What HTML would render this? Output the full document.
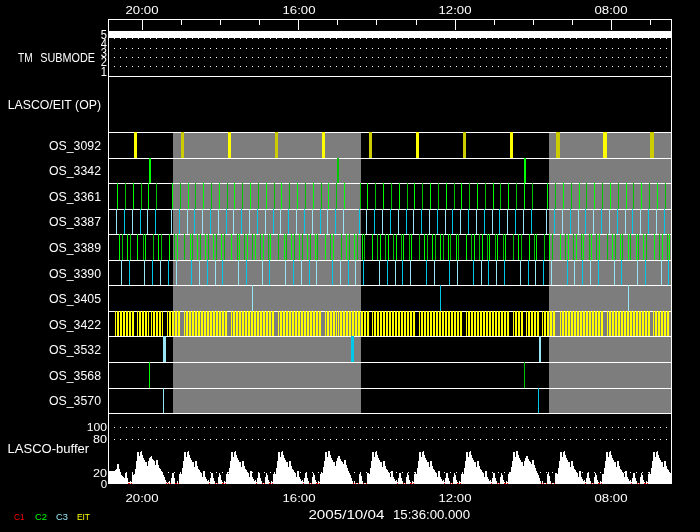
<!DOCTYPE html>
<html><head><meta charset="utf-8"><title>LASCO/EIT schedule</title>
<style>
html,body{margin:0;padding:0;background:#000;}
body{width:700px;height:532px;overflow:hidden;font-family:"Liberation Sans",sans-serif;}
svg{display:block;will-change:transform;}
text{font-family:"Liberation Sans",sans-serif;}
</style></head><body>
<svg width="700" height="532" viewBox="0 0 700 532" shape-rendering="crispEdges" font-family="'Liberation Sans', sans-serif">
<rect x="173" y="132" width="188" height="281" fill="#7d7d7d"/>
<rect x="549" y="132" width="122" height="281" fill="#7d7d7d"/>
<rect x="108" y="132" width="564" height="1" fill="#fff"/>
<rect x="108" y="158" width="564" height="1" fill="#fff"/>
<rect x="108" y="183" width="564" height="1" fill="#fff"/>
<rect x="108" y="209" width="564" height="1" fill="#fff"/>
<rect x="108" y="234" width="564" height="1" fill="#fff"/>
<rect x="108" y="260" width="564" height="1" fill="#fff"/>
<rect x="108" y="285" width="564" height="1" fill="#fff"/>
<rect x="108" y="311" width="564" height="1" fill="#fff"/>
<rect x="108" y="336" width="564" height="1" fill="#fff"/>
<rect x="108" y="362" width="564" height="1" fill="#fff"/>
<rect x="108" y="388" width="564" height="1" fill="#fff"/>
<rect x="108" y="413" width="564" height="1" fill="#fff"/>
<rect x="108" y="76" width="564" height="1" fill="#fff"/>
<rect x="134" y="132" width="3" height="26" fill="#ffff00"/>
<rect x="181" y="132" width="3" height="26" fill="#cccc00"/>
<rect x="228" y="132" width="3" height="26" fill="#ffff00"/>
<rect x="275" y="132" width="3" height="26" fill="#cccc00"/>
<rect x="322" y="132" width="3" height="26" fill="#ffff00"/>
<rect x="369" y="132" width="3" height="26" fill="#cccc00"/>
<rect x="416" y="132" width="3" height="26" fill="#ffff00"/>
<rect x="463" y="132" width="3" height="26" fill="#cccc00"/>
<rect x="510" y="132" width="3" height="26" fill="#ffff00"/>
<rect x="556" y="132" width="4" height="26" fill="#cccc00"/>
<rect x="603" y="132" width="4" height="26" fill="#ffff00"/>
<rect x="650" y="132" width="4" height="26" fill="#cccc00"/>
<rect x="149" y="158" width="2" height="25" fill="#00ff00"/>
<rect x="337" y="158" width="2" height="25" fill="#00c400"/>
<rect x="524" y="158" width="2" height="25" fill="#00ff00"/>
<rect x="117" y="183" width="1" height="26" fill="#00ff00"/>
<rect x="125" y="183" width="1" height="26" fill="#00c400"/>
<rect x="133" y="183" width="1" height="26" fill="#00ff00"/>
<rect x="141" y="183" width="1" height="26" fill="#00c400"/>
<rect x="148" y="183" width="1" height="26" fill="#00ff00"/>
<rect x="156" y="183" width="1" height="26" fill="#00c400"/>
<rect x="172" y="183" width="1" height="26" fill="#00ff00"/>
<rect x="180" y="183" width="1" height="26" fill="#00c400"/>
<rect x="188" y="183" width="1" height="26" fill="#00ff00"/>
<rect x="195" y="183" width="1" height="26" fill="#00c400"/>
<rect x="203" y="183" width="1" height="26" fill="#00ff00"/>
<rect x="211" y="183" width="1" height="26" fill="#00c400"/>
<rect x="219" y="183" width="1" height="26" fill="#00ff00"/>
<rect x="227" y="183" width="1" height="26" fill="#00c400"/>
<rect x="234" y="183" width="1" height="26" fill="#00ff00"/>
<rect x="242" y="183" width="1" height="26" fill="#00c400"/>
<rect x="250" y="183" width="1" height="26" fill="#00ff00"/>
<rect x="258" y="183" width="1" height="26" fill="#00c400"/>
<rect x="266" y="183" width="1" height="26" fill="#00ff00"/>
<rect x="274" y="183" width="1" height="26" fill="#00c400"/>
<rect x="281" y="183" width="1" height="26" fill="#00ff00"/>
<rect x="289" y="183" width="1" height="26" fill="#00c400"/>
<rect x="297" y="183" width="1" height="26" fill="#00ff00"/>
<rect x="305" y="183" width="1" height="26" fill="#00c400"/>
<rect x="313" y="183" width="1" height="26" fill="#00ff00"/>
<rect x="321" y="183" width="1" height="26" fill="#00c400"/>
<rect x="328" y="183" width="1" height="26" fill="#00ff00"/>
<rect x="336" y="183" width="1" height="26" fill="#00c400"/>
<rect x="344" y="183" width="1" height="26" fill="#00ff00"/>
<rect x="360" y="183" width="1" height="26" fill="#00c400"/>
<rect x="367" y="183" width="1" height="26" fill="#00ff00"/>
<rect x="375" y="183" width="1" height="26" fill="#00c400"/>
<rect x="383" y="183" width="1" height="26" fill="#00ff00"/>
<rect x="391" y="183" width="1" height="26" fill="#00c400"/>
<rect x="399" y="183" width="1" height="26" fill="#00ff00"/>
<rect x="407" y="183" width="1" height="26" fill="#00c400"/>
<rect x="414" y="183" width="1" height="26" fill="#00ff00"/>
<rect x="422" y="183" width="1" height="26" fill="#00c400"/>
<rect x="430" y="183" width="1" height="26" fill="#00ff00"/>
<rect x="438" y="183" width="1" height="26" fill="#00c400"/>
<rect x="446" y="183" width="1" height="26" fill="#00ff00"/>
<rect x="454" y="183" width="1" height="26" fill="#00c400"/>
<rect x="461" y="183" width="1" height="26" fill="#00ff00"/>
<rect x="469" y="183" width="1" height="26" fill="#00c400"/>
<rect x="477" y="183" width="1" height="26" fill="#00ff00"/>
<rect x="485" y="183" width="1" height="26" fill="#00c400"/>
<rect x="493" y="183" width="1" height="26" fill="#00ff00"/>
<rect x="500" y="183" width="1" height="26" fill="#00c400"/>
<rect x="508" y="183" width="1" height="26" fill="#00ff00"/>
<rect x="516" y="183" width="1" height="26" fill="#00c400"/>
<rect x="524" y="183" width="1" height="26" fill="#00ff00"/>
<rect x="532" y="183" width="1" height="26" fill="#00c400"/>
<rect x="547" y="183" width="1" height="26" fill="#00ff00"/>
<rect x="555" y="183" width="1" height="26" fill="#00c400"/>
<rect x="563" y="183" width="1" height="26" fill="#00ff00"/>
<rect x="571" y="183" width="1" height="26" fill="#00c400"/>
<rect x="579" y="183" width="1" height="26" fill="#00ff00"/>
<rect x="586" y="183" width="1" height="26" fill="#00c400"/>
<rect x="594" y="183" width="1" height="26" fill="#00ff00"/>
<rect x="602" y="183" width="1" height="26" fill="#00c400"/>
<rect x="610" y="183" width="1" height="26" fill="#00ff00"/>
<rect x="618" y="183" width="1" height="26" fill="#00c400"/>
<rect x="626" y="183" width="1" height="26" fill="#00ff00"/>
<rect x="633" y="183" width="1" height="26" fill="#00c400"/>
<rect x="641" y="183" width="1" height="26" fill="#00ff00"/>
<rect x="649" y="183" width="1" height="26" fill="#00c400"/>
<rect x="657" y="183" width="1" height="26" fill="#00ff00"/>
<rect x="665" y="183" width="1" height="26" fill="#00c400"/>
<rect x="116" y="209" width="1" height="25" fill="#96e6f5"/>
<rect x="124" y="209" width="1" height="25" fill="#00c8eb"/>
<rect x="132" y="209" width="1" height="25" fill="#96e6f5"/>
<rect x="140" y="209" width="1" height="25" fill="#00c8eb"/>
<rect x="147" y="209" width="1" height="25" fill="#96e6f5"/>
<rect x="155" y="209" width="1" height="25" fill="#00c8eb"/>
<rect x="171" y="209" width="1" height="25" fill="#96e6f5"/>
<rect x="179" y="209" width="1" height="25" fill="#00c8eb"/>
<rect x="187" y="209" width="1" height="25" fill="#96e6f5"/>
<rect x="194" y="209" width="1" height="25" fill="#00c8eb"/>
<rect x="202" y="209" width="1" height="25" fill="#96e6f5"/>
<rect x="210" y="209" width="1" height="25" fill="#00c8eb"/>
<rect x="218" y="209" width="1" height="25" fill="#96e6f5"/>
<rect x="226" y="209" width="1" height="25" fill="#00c8eb"/>
<rect x="233" y="209" width="1" height="25" fill="#96e6f5"/>
<rect x="241" y="209" width="1" height="25" fill="#00c8eb"/>
<rect x="249" y="209" width="1" height="25" fill="#96e6f5"/>
<rect x="257" y="209" width="1" height="25" fill="#00c8eb"/>
<rect x="265" y="209" width="1" height="25" fill="#96e6f5"/>
<rect x="273" y="209" width="1" height="25" fill="#00c8eb"/>
<rect x="280" y="209" width="1" height="25" fill="#96e6f5"/>
<rect x="288" y="209" width="1" height="25" fill="#00c8eb"/>
<rect x="296" y="209" width="1" height="25" fill="#96e6f5"/>
<rect x="304" y="209" width="1" height="25" fill="#00c8eb"/>
<rect x="312" y="209" width="1" height="25" fill="#96e6f5"/>
<rect x="320" y="209" width="1" height="25" fill="#00c8eb"/>
<rect x="327" y="209" width="1" height="25" fill="#96e6f5"/>
<rect x="335" y="209" width="1" height="25" fill="#00c8eb"/>
<rect x="343" y="209" width="1" height="25" fill="#96e6f5"/>
<rect x="359" y="209" width="1" height="25" fill="#00c8eb"/>
<rect x="366" y="209" width="1" height="25" fill="#96e6f5"/>
<rect x="374" y="209" width="1" height="25" fill="#00c8eb"/>
<rect x="382" y="209" width="1" height="25" fill="#96e6f5"/>
<rect x="390" y="209" width="1" height="25" fill="#00c8eb"/>
<rect x="398" y="209" width="1" height="25" fill="#96e6f5"/>
<rect x="406" y="209" width="1" height="25" fill="#00c8eb"/>
<rect x="413" y="209" width="1" height="25" fill="#96e6f5"/>
<rect x="421" y="209" width="1" height="25" fill="#00c8eb"/>
<rect x="429" y="209" width="1" height="25" fill="#96e6f5"/>
<rect x="437" y="209" width="1" height="25" fill="#00c8eb"/>
<rect x="445" y="209" width="1" height="25" fill="#96e6f5"/>
<rect x="452" y="209" width="1" height="25" fill="#00c8eb"/>
<rect x="460" y="209" width="1" height="25" fill="#96e6f5"/>
<rect x="468" y="209" width="1" height="25" fill="#00c8eb"/>
<rect x="476" y="209" width="1" height="25" fill="#96e6f5"/>
<rect x="484" y="209" width="1" height="25" fill="#00c8eb"/>
<rect x="492" y="209" width="1" height="25" fill="#96e6f5"/>
<rect x="499" y="209" width="1" height="25" fill="#00c8eb"/>
<rect x="507" y="209" width="1" height="25" fill="#96e6f5"/>
<rect x="515" y="209" width="1" height="25" fill="#00c8eb"/>
<rect x="523" y="209" width="1" height="25" fill="#96e6f5"/>
<rect x="531" y="209" width="1" height="25" fill="#00c8eb"/>
<rect x="546" y="209" width="1" height="25" fill="#96e6f5"/>
<rect x="554" y="209" width="1" height="25" fill="#00c8eb"/>
<rect x="562" y="209" width="1" height="25" fill="#96e6f5"/>
<rect x="570" y="209" width="1" height="25" fill="#00c8eb"/>
<rect x="578" y="209" width="1" height="25" fill="#96e6f5"/>
<rect x="585" y="209" width="1" height="25" fill="#00c8eb"/>
<rect x="593" y="209" width="1" height="25" fill="#96e6f5"/>
<rect x="601" y="209" width="1" height="25" fill="#00c8eb"/>
<rect x="609" y="209" width="1" height="25" fill="#96e6f5"/>
<rect x="617" y="209" width="1" height="25" fill="#00c8eb"/>
<rect x="625" y="209" width="1" height="25" fill="#96e6f5"/>
<rect x="632" y="209" width="1" height="25" fill="#00c8eb"/>
<rect x="640" y="209" width="1" height="25" fill="#96e6f5"/>
<rect x="648" y="209" width="1" height="25" fill="#00c8eb"/>
<rect x="656" y="209" width="1" height="25" fill="#96e6f5"/>
<rect x="664" y="209" width="1" height="25" fill="#00c8eb"/>
<rect x="119" y="234" width="1" height="26" fill="#00ff00"/>
<rect x="122" y="234" width="1" height="26" fill="#00c400"/>
<rect x="127" y="234" width="1" height="26" fill="#00ff00"/>
<rect x="130" y="234" width="1" height="26" fill="#00c400"/>
<rect x="137" y="234" width="1" height="26" fill="#00ff00"/>
<rect x="143" y="234" width="1" height="26" fill="#00c400"/>
<rect x="145" y="234" width="1" height="26" fill="#00ff00"/>
<rect x="153" y="234" width="1" height="26" fill="#00c400"/>
<rect x="158" y="234" width="1" height="26" fill="#00ff00"/>
<rect x="161" y="234" width="1" height="26" fill="#00c400"/>
<rect x="169" y="234" width="1" height="26" fill="#00ff00"/>
<rect x="174" y="234" width="1" height="26" fill="#00c400"/>
<rect x="177" y="234" width="1" height="26" fill="#00ff00"/>
<rect x="184" y="234" width="1" height="26" fill="#00c400"/>
<rect x="190" y="234" width="1" height="26" fill="#00ff00"/>
<rect x="192" y="234" width="1" height="26" fill="#00c400"/>
<rect x="197" y="234" width="1" height="26" fill="#00ff00"/>
<rect x="200" y="234" width="1" height="26" fill="#00c400"/>
<rect x="205" y="234" width="1" height="26" fill="#00ff00"/>
<rect x="208" y="234" width="1" height="26" fill="#00c400"/>
<rect x="213" y="234" width="1" height="26" fill="#00ff00"/>
<rect x="216" y="234" width="1" height="26" fill="#00c400"/>
<rect x="221" y="234" width="1" height="26" fill="#00ff00"/>
<rect x="224" y="234" width="1" height="26" fill="#00c400"/>
<rect x="231" y="234" width="1" height="26" fill="#00ff00"/>
<rect x="237" y="234" width="1" height="26" fill="#00c400"/>
<rect x="239" y="234" width="1" height="26" fill="#00ff00"/>
<rect x="244" y="234" width="1" height="26" fill="#00c400"/>
<rect x="247" y="234" width="1" height="26" fill="#00ff00"/>
<rect x="252" y="234" width="1" height="26" fill="#00c400"/>
<rect x="255" y="234" width="1" height="26" fill="#00ff00"/>
<rect x="260" y="234" width="1" height="26" fill="#00c400"/>
<rect x="263" y="234" width="1" height="26" fill="#00ff00"/>
<rect x="268" y="234" width="1" height="26" fill="#00c400"/>
<rect x="270" y="234" width="1" height="26" fill="#00ff00"/>
<rect x="278" y="234" width="1" height="26" fill="#00c400"/>
<rect x="284" y="234" width="1" height="26" fill="#00ff00"/>
<rect x="286" y="234" width="1" height="26" fill="#00c400"/>
<rect x="291" y="234" width="1" height="26" fill="#00ff00"/>
<rect x="294" y="234" width="1" height="26" fill="#00c400"/>
<rect x="299" y="234" width="1" height="26" fill="#00ff00"/>
<rect x="302" y="234" width="1" height="26" fill="#00c400"/>
<rect x="307" y="234" width="1" height="26" fill="#00ff00"/>
<rect x="310" y="234" width="1" height="26" fill="#00c400"/>
<rect x="315" y="234" width="1" height="26" fill="#00ff00"/>
<rect x="317" y="234" width="1" height="26" fill="#00c400"/>
<rect x="325" y="234" width="1" height="26" fill="#00ff00"/>
<rect x="330" y="234" width="1" height="26" fill="#00c400"/>
<rect x="333" y="234" width="1" height="26" fill="#00ff00"/>
<rect x="341" y="234" width="1" height="26" fill="#00c400"/>
<rect x="346" y="234" width="1" height="26" fill="#00ff00"/>
<rect x="349" y="234" width="1" height="26" fill="#00c400"/>
<rect x="354" y="234" width="1" height="26" fill="#00ff00"/>
<rect x="357" y="234" width="1" height="26" fill="#00c400"/>
<rect x="362" y="234" width="1" height="26" fill="#00ff00"/>
<rect x="364" y="234" width="1" height="26" fill="#00c400"/>
<rect x="372" y="234" width="1" height="26" fill="#00ff00"/>
<rect x="377" y="234" width="1" height="26" fill="#00c400"/>
<rect x="380" y="234" width="1" height="26" fill="#00ff00"/>
<rect x="385" y="234" width="1" height="26" fill="#00c400"/>
<rect x="388" y="234" width="1" height="26" fill="#00ff00"/>
<rect x="393" y="234" width="1" height="26" fill="#00c400"/>
<rect x="396" y="234" width="1" height="26" fill="#00ff00"/>
<rect x="401" y="234" width="1" height="26" fill="#00c400"/>
<rect x="403" y="234" width="1" height="26" fill="#00ff00"/>
<rect x="409" y="234" width="1" height="26" fill="#00c400"/>
<rect x="411" y="234" width="1" height="26" fill="#00ff00"/>
<rect x="419" y="234" width="1" height="26" fill="#00c400"/>
<rect x="424" y="234" width="1" height="26" fill="#00ff00"/>
<rect x="427" y="234" width="1" height="26" fill="#00c400"/>
<rect x="432" y="234" width="1" height="26" fill="#00ff00"/>
<rect x="435" y="234" width="1" height="26" fill="#00c400"/>
<rect x="440" y="234" width="1" height="26" fill="#00ff00"/>
<rect x="443" y="234" width="1" height="26" fill="#00c400"/>
<rect x="448" y="234" width="1" height="26" fill="#00ff00"/>
<rect x="450" y="234" width="1" height="26" fill="#00c400"/>
<rect x="456" y="234" width="1" height="26" fill="#00ff00"/>
<rect x="458" y="234" width="1" height="26" fill="#00c400"/>
<rect x="466" y="234" width="1" height="26" fill="#00ff00"/>
<rect x="471" y="234" width="1" height="26" fill="#00c400"/>
<rect x="474" y="234" width="1" height="26" fill="#00ff00"/>
<rect x="479" y="234" width="1" height="26" fill="#00c400"/>
<rect x="482" y="234" width="1" height="26" fill="#00ff00"/>
<rect x="487" y="234" width="1" height="26" fill="#00c400"/>
<rect x="489" y="234" width="1" height="26" fill="#00ff00"/>
<rect x="495" y="234" width="1" height="26" fill="#00c400"/>
<rect x="497" y="234" width="1" height="26" fill="#00ff00"/>
<rect x="503" y="234" width="1" height="26" fill="#00c400"/>
<rect x="505" y="234" width="1" height="26" fill="#00ff00"/>
<rect x="513" y="234" width="1" height="26" fill="#00c400"/>
<rect x="518" y="234" width="1" height="26" fill="#00ff00"/>
<rect x="521" y="234" width="1" height="26" fill="#00c400"/>
<rect x="529" y="234" width="1" height="26" fill="#00ff00"/>
<rect x="534" y="234" width="1" height="26" fill="#00c400"/>
<rect x="536" y="234" width="1" height="26" fill="#00ff00"/>
<rect x="544" y="234" width="1" height="26" fill="#00c400"/>
<rect x="549" y="234" width="1" height="26" fill="#00ff00"/>
<rect x="552" y="234" width="1" height="26" fill="#00c400"/>
<rect x="560" y="234" width="1" height="26" fill="#00ff00"/>
<rect x="565" y="234" width="1" height="26" fill="#00c400"/>
<rect x="568" y="234" width="1" height="26" fill="#00ff00"/>
<rect x="573" y="234" width="1" height="26" fill="#00c400"/>
<rect x="576" y="234" width="1" height="26" fill="#00ff00"/>
<rect x="581" y="234" width="1" height="26" fill="#00c400"/>
<rect x="583" y="234" width="1" height="26" fill="#00ff00"/>
<rect x="589" y="234" width="1" height="26" fill="#00c400"/>
<rect x="591" y="234" width="1" height="26" fill="#00ff00"/>
<rect x="596" y="234" width="1" height="26" fill="#00c400"/>
<rect x="599" y="234" width="1" height="26" fill="#00ff00"/>
<rect x="607" y="234" width="1" height="26" fill="#00c400"/>
<rect x="612" y="234" width="1" height="26" fill="#00ff00"/>
<rect x="615" y="234" width="1" height="26" fill="#00c400"/>
<rect x="620" y="234" width="1" height="26" fill="#00ff00"/>
<rect x="622" y="234" width="1" height="26" fill="#00c400"/>
<rect x="628" y="234" width="1" height="26" fill="#00ff00"/>
<rect x="630" y="234" width="1" height="26" fill="#00c400"/>
<rect x="636" y="234" width="1" height="26" fill="#00ff00"/>
<rect x="638" y="234" width="1" height="26" fill="#00c400"/>
<rect x="643" y="234" width="1" height="26" fill="#00ff00"/>
<rect x="646" y="234" width="1" height="26" fill="#00c400"/>
<rect x="654" y="234" width="1" height="26" fill="#00ff00"/>
<rect x="659" y="234" width="1" height="26" fill="#00c400"/>
<rect x="662" y="234" width="1" height="26" fill="#00ff00"/>
<rect x="667" y="234" width="1" height="26" fill="#00c400"/>
<rect x="669" y="234" width="1" height="26" fill="#00ff00"/>
<rect x="121" y="260" width="1" height="25" fill="#96e6f5"/>
<rect x="129" y="260" width="1" height="25" fill="#00c8eb"/>
<rect x="144" y="260" width="1" height="25" fill="#96e6f5"/>
<rect x="152" y="260" width="1" height="25" fill="#00c8eb"/>
<rect x="160" y="260" width="1" height="25" fill="#96e6f5"/>
<rect x="168" y="260" width="1" height="25" fill="#00c8eb"/>
<rect x="176" y="260" width="1" height="25" fill="#96e6f5"/>
<rect x="191" y="260" width="1" height="25" fill="#00c8eb"/>
<rect x="199" y="260" width="1" height="25" fill="#96e6f5"/>
<rect x="207" y="260" width="1" height="25" fill="#00c8eb"/>
<rect x="215" y="260" width="1" height="25" fill="#96e6f5"/>
<rect x="222" y="260" width="1" height="25" fill="#00c8eb"/>
<rect x="238" y="260" width="1" height="25" fill="#96e6f5"/>
<rect x="246" y="260" width="1" height="25" fill="#00c8eb"/>
<rect x="262" y="260" width="1" height="25" fill="#96e6f5"/>
<rect x="269" y="260" width="1" height="25" fill="#00c8eb"/>
<rect x="285" y="260" width="1" height="25" fill="#96e6f5"/>
<rect x="293" y="260" width="1" height="25" fill="#00c8eb"/>
<rect x="301" y="260" width="1" height="25" fill="#96e6f5"/>
<rect x="309" y="260" width="1" height="25" fill="#00c8eb"/>
<rect x="316" y="260" width="1" height="25" fill="#96e6f5"/>
<rect x="332" y="260" width="1" height="25" fill="#00c8eb"/>
<rect x="340" y="260" width="1" height="25" fill="#96e6f5"/>
<rect x="348" y="260" width="1" height="25" fill="#00c8eb"/>
<rect x="355" y="260" width="1" height="25" fill="#96e6f5"/>
<rect x="363" y="260" width="1" height="25" fill="#00c8eb"/>
<rect x="379" y="260" width="1" height="25" fill="#96e6f5"/>
<rect x="387" y="260" width="1" height="25" fill="#00c8eb"/>
<rect x="395" y="260" width="1" height="25" fill="#96e6f5"/>
<rect x="402" y="260" width="1" height="25" fill="#00c8eb"/>
<rect x="410" y="260" width="1" height="25" fill="#96e6f5"/>
<rect x="426" y="260" width="1" height="25" fill="#00c8eb"/>
<rect x="434" y="260" width="1" height="25" fill="#96e6f5"/>
<rect x="449" y="260" width="1" height="25" fill="#00c8eb"/>
<rect x="457" y="260" width="1" height="25" fill="#96e6f5"/>
<rect x="473" y="260" width="1" height="25" fill="#00c8eb"/>
<rect x="481" y="260" width="1" height="25" fill="#96e6f5"/>
<rect x="488" y="260" width="1" height="25" fill="#00c8eb"/>
<rect x="496" y="260" width="1" height="25" fill="#96e6f5"/>
<rect x="504" y="260" width="1" height="25" fill="#00c8eb"/>
<rect x="520" y="260" width="1" height="25" fill="#96e6f5"/>
<rect x="528" y="260" width="1" height="25" fill="#00c8eb"/>
<rect x="535" y="260" width="1" height="25" fill="#96e6f5"/>
<rect x="543" y="260" width="1" height="25" fill="#00c8eb"/>
<rect x="551" y="260" width="1" height="25" fill="#96e6f5"/>
<rect x="567" y="260" width="1" height="25" fill="#00c8eb"/>
<rect x="574" y="260" width="1" height="25" fill="#96e6f5"/>
<rect x="582" y="260" width="1" height="25" fill="#00c8eb"/>
<rect x="590" y="260" width="1" height="25" fill="#96e6f5"/>
<rect x="598" y="260" width="1" height="25" fill="#00c8eb"/>
<rect x="614" y="260" width="1" height="25" fill="#96e6f5"/>
<rect x="621" y="260" width="1" height="25" fill="#00c8eb"/>
<rect x="637" y="260" width="1" height="25" fill="#96e6f5"/>
<rect x="645" y="260" width="1" height="25" fill="#00c8eb"/>
<rect x="661" y="260" width="1" height="25" fill="#96e6f5"/>
<rect x="668" y="260" width="1" height="25" fill="#00c8eb"/>
<rect x="252" y="285" width="1" height="26" fill="#96e6f5"/>
<rect x="440" y="285" width="1" height="26" fill="#00c8eb"/>
<rect x="628" y="285" width="1" height="26" fill="#96e6f5"/>
<rect x="115" y="311" width="1" height="25" fill="#ffff00"/>
<rect x="117" y="311" width="2" height="25" fill="#ffff00"/>
<rect x="120" y="311" width="2" height="25" fill="#ffff00"/>
<rect x="123" y="311" width="2" height="25" fill="#ffff00"/>
<rect x="126" y="311" width="2" height="25" fill="#ffff00"/>
<rect x="129" y="311" width="2" height="25" fill="#ffff00"/>
<rect x="132" y="311" width="2" height="25" fill="#ffff00"/>
<rect x="137" y="311" width="1" height="25" fill="#ffff00"/>
<rect x="139" y="311" width="2" height="25" fill="#ffff00"/>
<rect x="142" y="311" width="2" height="25" fill="#ffff00"/>
<rect x="145" y="311" width="2" height="25" fill="#ffff00"/>
<rect x="148" y="311" width="1" height="25" fill="#ffff00"/>
<rect x="151" y="311" width="1" height="25" fill="#ffff00"/>
<rect x="153" y="311" width="2" height="25" fill="#ffff00"/>
<rect x="156" y="311" width="2" height="25" fill="#ffff00"/>
<rect x="159" y="311" width="2" height="25" fill="#ffff00"/>
<rect x="162" y="311" width="1" height="25" fill="#ffff00"/>
<rect x="167" y="311" width="1" height="25" fill="#ffff00"/>
<rect x="169" y="311" width="2" height="25" fill="#ffff00"/>
<rect x="172" y="311" width="2" height="25" fill="#ffff00"/>
<rect x="175" y="311" width="2" height="25" fill="#ffff00"/>
<rect x="178" y="311" width="2" height="25" fill="#ffff00"/>
<rect x="184" y="311" width="1" height="25" fill="#ffff00"/>
<rect x="186" y="311" width="2" height="25" fill="#ffff00"/>
<rect x="189" y="311" width="2" height="25" fill="#ffff00"/>
<rect x="192" y="311" width="2" height="25" fill="#ffff00"/>
<rect x="195" y="311" width="2" height="25" fill="#ffff00"/>
<rect x="198" y="311" width="2" height="25" fill="#ffff00"/>
<rect x="201" y="311" width="2" height="25" fill="#ffff00"/>
<rect x="204" y="311" width="2" height="25" fill="#ffff00"/>
<rect x="207" y="311" width="2" height="25" fill="#ffff00"/>
<rect x="210" y="311" width="2" height="25" fill="#ffff00"/>
<rect x="213" y="311" width="2" height="25" fill="#ffff00"/>
<rect x="216" y="311" width="2" height="25" fill="#ffff00"/>
<rect x="219" y="311" width="2" height="25" fill="#ffff00"/>
<rect x="222" y="311" width="2" height="25" fill="#ffff00"/>
<rect x="225" y="311" width="2" height="25" fill="#ffff00"/>
<rect x="231" y="311" width="1" height="25" fill="#ffff00"/>
<rect x="233" y="311" width="2" height="25" fill="#ffff00"/>
<rect x="236" y="311" width="2" height="25" fill="#ffff00"/>
<rect x="239" y="311" width="2" height="25" fill="#ffff00"/>
<rect x="242" y="311" width="2" height="25" fill="#ffff00"/>
<rect x="245" y="311" width="2" height="25" fill="#ffff00"/>
<rect x="248" y="311" width="2" height="25" fill="#ffff00"/>
<rect x="251" y="311" width="2" height="25" fill="#ffff00"/>
<rect x="254" y="311" width="2" height="25" fill="#ffff00"/>
<rect x="257" y="311" width="2" height="25" fill="#ffff00"/>
<rect x="260" y="311" width="2" height="25" fill="#ffff00"/>
<rect x="263" y="311" width="2" height="25" fill="#ffff00"/>
<rect x="266" y="311" width="2" height="25" fill="#ffff00"/>
<rect x="269" y="311" width="2" height="25" fill="#ffff00"/>
<rect x="272" y="311" width="2" height="25" fill="#ffff00"/>
<rect x="278" y="311" width="1" height="25" fill="#ffff00"/>
<rect x="280" y="311" width="2" height="25" fill="#ffff00"/>
<rect x="283" y="311" width="2" height="25" fill="#ffff00"/>
<rect x="286" y="311" width="2" height="25" fill="#ffff00"/>
<rect x="289" y="311" width="2" height="25" fill="#ffff00"/>
<rect x="292" y="311" width="2" height="25" fill="#ffff00"/>
<rect x="295" y="311" width="2" height="25" fill="#ffff00"/>
<rect x="298" y="311" width="2" height="25" fill="#ffff00"/>
<rect x="301" y="311" width="2" height="25" fill="#ffff00"/>
<rect x="304" y="311" width="2" height="25" fill="#ffff00"/>
<rect x="307" y="311" width="2" height="25" fill="#ffff00"/>
<rect x="310" y="311" width="2" height="25" fill="#ffff00"/>
<rect x="313" y="311" width="2" height="25" fill="#ffff00"/>
<rect x="316" y="311" width="2" height="25" fill="#ffff00"/>
<rect x="319" y="311" width="2" height="25" fill="#ffff00"/>
<rect x="325" y="311" width="1" height="25" fill="#ffff00"/>
<rect x="327" y="311" width="2" height="25" fill="#ffff00"/>
<rect x="330" y="311" width="2" height="25" fill="#ffff00"/>
<rect x="333" y="311" width="2" height="25" fill="#ffff00"/>
<rect x="336" y="311" width="1" height="25" fill="#ffff00"/>
<rect x="338" y="311" width="1" height="25" fill="#ffff00"/>
<rect x="340" y="311" width="2" height="25" fill="#ffff00"/>
<rect x="343" y="311" width="2" height="25" fill="#ffff00"/>
<rect x="346" y="311" width="2" height="25" fill="#ffff00"/>
<rect x="349" y="311" width="2" height="25" fill="#ffff00"/>
<rect x="352" y="311" width="2" height="25" fill="#ffff00"/>
<rect x="355" y="311" width="2" height="25" fill="#ffff00"/>
<rect x="358" y="311" width="2" height="25" fill="#ffff00"/>
<rect x="361" y="311" width="2" height="25" fill="#ffff00"/>
<rect x="364" y="311" width="2" height="25" fill="#ffff00"/>
<rect x="367" y="311" width="2" height="25" fill="#ffff00"/>
<rect x="372" y="311" width="1" height="25" fill="#ffff00"/>
<rect x="374" y="311" width="2" height="25" fill="#ffff00"/>
<rect x="377" y="311" width="2" height="25" fill="#ffff00"/>
<rect x="380" y="311" width="2" height="25" fill="#ffff00"/>
<rect x="383" y="311" width="2" height="25" fill="#ffff00"/>
<rect x="386" y="311" width="2" height="25" fill="#ffff00"/>
<rect x="389" y="311" width="2" height="25" fill="#ffff00"/>
<rect x="392" y="311" width="2" height="25" fill="#ffff00"/>
<rect x="395" y="311" width="2" height="25" fill="#ffff00"/>
<rect x="398" y="311" width="2" height="25" fill="#ffff00"/>
<rect x="401" y="311" width="2" height="25" fill="#ffff00"/>
<rect x="404" y="311" width="2" height="25" fill="#ffff00"/>
<rect x="407" y="311" width="2" height="25" fill="#ffff00"/>
<rect x="410" y="311" width="2" height="25" fill="#ffff00"/>
<rect x="413" y="311" width="2" height="25" fill="#ffff00"/>
<rect x="419" y="311" width="1" height="25" fill="#ffff00"/>
<rect x="421" y="311" width="2" height="25" fill="#ffff00"/>
<rect x="424" y="311" width="2" height="25" fill="#ffff00"/>
<rect x="427" y="311" width="2" height="25" fill="#ffff00"/>
<rect x="430" y="311" width="2" height="25" fill="#ffff00"/>
<rect x="433" y="311" width="2" height="25" fill="#ffff00"/>
<rect x="436" y="311" width="2" height="25" fill="#ffff00"/>
<rect x="439" y="311" width="2" height="25" fill="#ffff00"/>
<rect x="442" y="311" width="2" height="25" fill="#ffff00"/>
<rect x="445" y="311" width="2" height="25" fill="#ffff00"/>
<rect x="448" y="311" width="2" height="25" fill="#ffff00"/>
<rect x="451" y="311" width="2" height="25" fill="#ffff00"/>
<rect x="454" y="311" width="2" height="25" fill="#ffff00"/>
<rect x="457" y="311" width="2" height="25" fill="#ffff00"/>
<rect x="460" y="311" width="2" height="25" fill="#ffff00"/>
<rect x="466" y="311" width="1" height="25" fill="#ffff00"/>
<rect x="468" y="311" width="2" height="25" fill="#ffff00"/>
<rect x="471" y="311" width="2" height="25" fill="#ffff00"/>
<rect x="474" y="311" width="2" height="25" fill="#ffff00"/>
<rect x="477" y="311" width="2" height="25" fill="#ffff00"/>
<rect x="480" y="311" width="2" height="25" fill="#ffff00"/>
<rect x="483" y="311" width="2" height="25" fill="#ffff00"/>
<rect x="486" y="311" width="2" height="25" fill="#ffff00"/>
<rect x="489" y="311" width="2" height="25" fill="#ffff00"/>
<rect x="492" y="311" width="2" height="25" fill="#ffff00"/>
<rect x="495" y="311" width="2" height="25" fill="#ffff00"/>
<rect x="498" y="311" width="2" height="25" fill="#ffff00"/>
<rect x="501" y="311" width="2" height="25" fill="#ffff00"/>
<rect x="504" y="311" width="2" height="25" fill="#ffff00"/>
<rect x="507" y="311" width="2" height="25" fill="#ffff00"/>
<rect x="513" y="311" width="1" height="25" fill="#ffff00"/>
<rect x="515" y="311" width="2" height="25" fill="#ffff00"/>
<rect x="518" y="311" width="2" height="25" fill="#ffff00"/>
<rect x="521" y="311" width="2" height="25" fill="#ffff00"/>
<rect x="526" y="311" width="1" height="25" fill="#ffff00"/>
<rect x="528" y="311" width="2" height="25" fill="#ffff00"/>
<rect x="531" y="311" width="2" height="25" fill="#ffff00"/>
<rect x="534" y="311" width="2" height="25" fill="#ffff00"/>
<rect x="537" y="311" width="2" height="25" fill="#ffff00"/>
<rect x="542" y="311" width="1" height="25" fill="#ffff00"/>
<rect x="544" y="311" width="2" height="25" fill="#ffff00"/>
<rect x="547" y="311" width="2" height="25" fill="#ffff00"/>
<rect x="550" y="311" width="2" height="25" fill="#ffff00"/>
<rect x="553" y="311" width="2" height="25" fill="#ffff00"/>
<rect x="560" y="311" width="1" height="25" fill="#ffff00"/>
<rect x="562" y="311" width="2" height="25" fill="#ffff00"/>
<rect x="565" y="311" width="2" height="25" fill="#ffff00"/>
<rect x="568" y="311" width="2" height="25" fill="#ffff00"/>
<rect x="571" y="311" width="2" height="25" fill="#ffff00"/>
<rect x="574" y="311" width="2" height="25" fill="#ffff00"/>
<rect x="577" y="311" width="2" height="25" fill="#ffff00"/>
<rect x="580" y="311" width="2" height="25" fill="#ffff00"/>
<rect x="583" y="311" width="2" height="25" fill="#ffff00"/>
<rect x="586" y="311" width="2" height="25" fill="#ffff00"/>
<rect x="589" y="311" width="2" height="25" fill="#ffff00"/>
<rect x="592" y="311" width="2" height="25" fill="#ffff00"/>
<rect x="595" y="311" width="2" height="25" fill="#ffff00"/>
<rect x="598" y="311" width="2" height="25" fill="#ffff00"/>
<rect x="601" y="311" width="2" height="25" fill="#ffff00"/>
<rect x="607" y="311" width="1" height="25" fill="#ffff00"/>
<rect x="609" y="311" width="2" height="25" fill="#ffff00"/>
<rect x="612" y="311" width="2" height="25" fill="#ffff00"/>
<rect x="615" y="311" width="2" height="25" fill="#ffff00"/>
<rect x="618" y="311" width="2" height="25" fill="#ffff00"/>
<rect x="621" y="311" width="2" height="25" fill="#ffff00"/>
<rect x="624" y="311" width="2" height="25" fill="#ffff00"/>
<rect x="627" y="311" width="2" height="25" fill="#ffff00"/>
<rect x="630" y="311" width="2" height="25" fill="#ffff00"/>
<rect x="633" y="311" width="2" height="25" fill="#ffff00"/>
<rect x="636" y="311" width="2" height="25" fill="#ffff00"/>
<rect x="639" y="311" width="2" height="25" fill="#ffff00"/>
<rect x="642" y="311" width="2" height="25" fill="#ffff00"/>
<rect x="645" y="311" width="2" height="25" fill="#ffff00"/>
<rect x="648" y="311" width="2" height="25" fill="#ffff00"/>
<rect x="653" y="311" width="1" height="25" fill="#ffff00"/>
<rect x="655" y="311" width="2" height="25" fill="#ffff00"/>
<rect x="658" y="311" width="2" height="25" fill="#ffff00"/>
<rect x="661" y="311" width="2" height="25" fill="#ffff00"/>
<rect x="664" y="311" width="2" height="25" fill="#ffff00"/>
<rect x="667" y="311" width="2" height="25" fill="#ffff00"/>
<rect x="163" y="336" width="3" height="26" fill="#96e6f5"/>
<rect x="351" y="336" width="3" height="26" fill="#00c8eb"/>
<rect x="539" y="336" width="2" height="26" fill="#96e6f5"/>
<rect x="149" y="362" width="1" height="26" fill="#00ff00"/>
<rect x="524" y="362" width="1" height="26" fill="#00c400"/>
<rect x="163" y="388" width="1" height="25" fill="#96e6f5"/>
<rect x="538" y="388" width="1" height="25" fill="#00c8eb"/>
<rect x="108" y="413" width="564" height="1" fill="#fff"/>
<rect x="109" y="31" width="562" height="7" fill="#fff"/>
<rect x="114" y="38" width="1" height="1" fill="#fff"/>
<rect x="120" y="38" width="1" height="1" fill="#fff"/>
<rect x="126" y="38" width="1" height="1" fill="#fff"/>
<rect x="132" y="38" width="1" height="1" fill="#fff"/>
<rect x="138" y="38" width="1" height="1" fill="#fff"/>
<rect x="144" y="38" width="1" height="1" fill="#fff"/>
<rect x="150" y="38" width="1" height="1" fill="#fff"/>
<rect x="156" y="38" width="1" height="1" fill="#fff"/>
<rect x="162" y="38" width="1" height="1" fill="#fff"/>
<rect x="168" y="38" width="1" height="1" fill="#fff"/>
<rect x="174" y="38" width="1" height="1" fill="#fff"/>
<rect x="180" y="38" width="1" height="1" fill="#fff"/>
<rect x="186" y="38" width="1" height="1" fill="#fff"/>
<rect x="192" y="38" width="1" height="1" fill="#fff"/>
<rect x="198" y="38" width="1" height="1" fill="#fff"/>
<rect x="204" y="38" width="1" height="1" fill="#fff"/>
<rect x="210" y="38" width="1" height="1" fill="#fff"/>
<rect x="216" y="38" width="1" height="1" fill="#fff"/>
<rect x="222" y="38" width="1" height="1" fill="#fff"/>
<rect x="228" y="38" width="1" height="1" fill="#fff"/>
<rect x="234" y="38" width="1" height="1" fill="#fff"/>
<rect x="240" y="38" width="1" height="1" fill="#fff"/>
<rect x="246" y="38" width="1" height="1" fill="#fff"/>
<rect x="252" y="38" width="1" height="1" fill="#fff"/>
<rect x="258" y="38" width="1" height="1" fill="#fff"/>
<rect x="264" y="38" width="1" height="1" fill="#fff"/>
<rect x="270" y="38" width="1" height="1" fill="#fff"/>
<rect x="276" y="38" width="1" height="1" fill="#fff"/>
<rect x="282" y="38" width="1" height="1" fill="#fff"/>
<rect x="288" y="38" width="1" height="1" fill="#fff"/>
<rect x="294" y="38" width="1" height="1" fill="#fff"/>
<rect x="300" y="38" width="1" height="1" fill="#fff"/>
<rect x="306" y="38" width="1" height="1" fill="#fff"/>
<rect x="312" y="38" width="1" height="1" fill="#fff"/>
<rect x="318" y="38" width="1" height="1" fill="#fff"/>
<rect x="324" y="38" width="1" height="1" fill="#fff"/>
<rect x="330" y="38" width="1" height="1" fill="#fff"/>
<rect x="336" y="38" width="1" height="1" fill="#fff"/>
<rect x="342" y="38" width="1" height="1" fill="#fff"/>
<rect x="348" y="38" width="1" height="1" fill="#fff"/>
<rect x="354" y="38" width="1" height="1" fill="#fff"/>
<rect x="360" y="38" width="1" height="1" fill="#fff"/>
<rect x="366" y="38" width="1" height="1" fill="#fff"/>
<rect x="372" y="38" width="1" height="1" fill="#fff"/>
<rect x="378" y="38" width="1" height="1" fill="#fff"/>
<rect x="384" y="38" width="1" height="1" fill="#fff"/>
<rect x="390" y="38" width="1" height="1" fill="#fff"/>
<rect x="396" y="38" width="1" height="1" fill="#fff"/>
<rect x="402" y="38" width="1" height="1" fill="#fff"/>
<rect x="408" y="38" width="1" height="1" fill="#fff"/>
<rect x="414" y="38" width="1" height="1" fill="#fff"/>
<rect x="420" y="38" width="1" height="1" fill="#fff"/>
<rect x="426" y="38" width="1" height="1" fill="#fff"/>
<rect x="432" y="38" width="1" height="1" fill="#fff"/>
<rect x="438" y="38" width="1" height="1" fill="#fff"/>
<rect x="444" y="38" width="1" height="1" fill="#fff"/>
<rect x="450" y="38" width="1" height="1" fill="#fff"/>
<rect x="456" y="38" width="1" height="1" fill="#fff"/>
<rect x="462" y="38" width="1" height="1" fill="#fff"/>
<rect x="468" y="38" width="1" height="1" fill="#fff"/>
<rect x="474" y="38" width="1" height="1" fill="#fff"/>
<rect x="480" y="38" width="1" height="1" fill="#fff"/>
<rect x="486" y="38" width="1" height="1" fill="#fff"/>
<rect x="492" y="38" width="1" height="1" fill="#fff"/>
<rect x="498" y="38" width="1" height="1" fill="#fff"/>
<rect x="504" y="38" width="1" height="1" fill="#fff"/>
<rect x="510" y="38" width="1" height="1" fill="#fff"/>
<rect x="516" y="38" width="1" height="1" fill="#fff"/>
<rect x="522" y="38" width="1" height="1" fill="#fff"/>
<rect x="528" y="38" width="1" height="1" fill="#fff"/>
<rect x="534" y="38" width="1" height="1" fill="#fff"/>
<rect x="540" y="38" width="1" height="1" fill="#fff"/>
<rect x="546" y="38" width="1" height="1" fill="#fff"/>
<rect x="552" y="38" width="1" height="1" fill="#fff"/>
<rect x="558" y="38" width="1" height="1" fill="#fff"/>
<rect x="564" y="38" width="1" height="1" fill="#fff"/>
<rect x="570" y="38" width="1" height="1" fill="#fff"/>
<rect x="576" y="38" width="1" height="1" fill="#fff"/>
<rect x="582" y="38" width="1" height="1" fill="#fff"/>
<rect x="588" y="38" width="1" height="1" fill="#fff"/>
<rect x="594" y="38" width="1" height="1" fill="#fff"/>
<rect x="600" y="38" width="1" height="1" fill="#fff"/>
<rect x="606" y="38" width="1" height="1" fill="#fff"/>
<rect x="612" y="38" width="1" height="1" fill="#fff"/>
<rect x="618" y="38" width="1" height="1" fill="#fff"/>
<rect x="624" y="38" width="1" height="1" fill="#fff"/>
<rect x="630" y="38" width="1" height="1" fill="#fff"/>
<rect x="636" y="38" width="1" height="1" fill="#fff"/>
<rect x="642" y="38" width="1" height="1" fill="#fff"/>
<rect x="648" y="38" width="1" height="1" fill="#fff"/>
<rect x="654" y="38" width="1" height="1" fill="#fff"/>
<rect x="660" y="38" width="1" height="1" fill="#fff"/>
<rect x="666" y="38" width="1" height="1" fill="#fff"/>
<rect x="114" y="48" width="1" height="1" fill="#fff"/>
<rect x="120" y="48" width="1" height="1" fill="#fff"/>
<rect x="126" y="48" width="1" height="1" fill="#fff"/>
<rect x="132" y="48" width="1" height="1" fill="#fff"/>
<rect x="138" y="48" width="1" height="1" fill="#fff"/>
<rect x="144" y="48" width="1" height="1" fill="#fff"/>
<rect x="150" y="48" width="1" height="1" fill="#fff"/>
<rect x="156" y="48" width="1" height="1" fill="#fff"/>
<rect x="162" y="48" width="1" height="1" fill="#fff"/>
<rect x="168" y="48" width="1" height="1" fill="#fff"/>
<rect x="174" y="48" width="1" height="1" fill="#fff"/>
<rect x="180" y="48" width="1" height="1" fill="#fff"/>
<rect x="186" y="48" width="1" height="1" fill="#fff"/>
<rect x="192" y="48" width="1" height="1" fill="#fff"/>
<rect x="198" y="48" width="1" height="1" fill="#fff"/>
<rect x="204" y="48" width="1" height="1" fill="#fff"/>
<rect x="210" y="48" width="1" height="1" fill="#fff"/>
<rect x="216" y="48" width="1" height="1" fill="#fff"/>
<rect x="222" y="48" width="1" height="1" fill="#fff"/>
<rect x="228" y="48" width="1" height="1" fill="#fff"/>
<rect x="234" y="48" width="1" height="1" fill="#fff"/>
<rect x="240" y="48" width="1" height="1" fill="#fff"/>
<rect x="246" y="48" width="1" height="1" fill="#fff"/>
<rect x="252" y="48" width="1" height="1" fill="#fff"/>
<rect x="258" y="48" width="1" height="1" fill="#fff"/>
<rect x="264" y="48" width="1" height="1" fill="#fff"/>
<rect x="270" y="48" width="1" height="1" fill="#fff"/>
<rect x="276" y="48" width="1" height="1" fill="#fff"/>
<rect x="282" y="48" width="1" height="1" fill="#fff"/>
<rect x="288" y="48" width="1" height="1" fill="#fff"/>
<rect x="294" y="48" width="1" height="1" fill="#fff"/>
<rect x="300" y="48" width="1" height="1" fill="#fff"/>
<rect x="306" y="48" width="1" height="1" fill="#fff"/>
<rect x="312" y="48" width="1" height="1" fill="#fff"/>
<rect x="318" y="48" width="1" height="1" fill="#fff"/>
<rect x="324" y="48" width="1" height="1" fill="#fff"/>
<rect x="330" y="48" width="1" height="1" fill="#fff"/>
<rect x="336" y="48" width="1" height="1" fill="#fff"/>
<rect x="342" y="48" width="1" height="1" fill="#fff"/>
<rect x="348" y="48" width="1" height="1" fill="#fff"/>
<rect x="354" y="48" width="1" height="1" fill="#fff"/>
<rect x="360" y="48" width="1" height="1" fill="#fff"/>
<rect x="366" y="48" width="1" height="1" fill="#fff"/>
<rect x="372" y="48" width="1" height="1" fill="#fff"/>
<rect x="378" y="48" width="1" height="1" fill="#fff"/>
<rect x="384" y="48" width="1" height="1" fill="#fff"/>
<rect x="390" y="48" width="1" height="1" fill="#fff"/>
<rect x="396" y="48" width="1" height="1" fill="#fff"/>
<rect x="402" y="48" width="1" height="1" fill="#fff"/>
<rect x="408" y="48" width="1" height="1" fill="#fff"/>
<rect x="414" y="48" width="1" height="1" fill="#fff"/>
<rect x="420" y="48" width="1" height="1" fill="#fff"/>
<rect x="426" y="48" width="1" height="1" fill="#fff"/>
<rect x="432" y="48" width="1" height="1" fill="#fff"/>
<rect x="438" y="48" width="1" height="1" fill="#fff"/>
<rect x="444" y="48" width="1" height="1" fill="#fff"/>
<rect x="450" y="48" width="1" height="1" fill="#fff"/>
<rect x="456" y="48" width="1" height="1" fill="#fff"/>
<rect x="462" y="48" width="1" height="1" fill="#fff"/>
<rect x="468" y="48" width="1" height="1" fill="#fff"/>
<rect x="474" y="48" width="1" height="1" fill="#fff"/>
<rect x="480" y="48" width="1" height="1" fill="#fff"/>
<rect x="486" y="48" width="1" height="1" fill="#fff"/>
<rect x="492" y="48" width="1" height="1" fill="#fff"/>
<rect x="498" y="48" width="1" height="1" fill="#fff"/>
<rect x="504" y="48" width="1" height="1" fill="#fff"/>
<rect x="510" y="48" width="1" height="1" fill="#fff"/>
<rect x="516" y="48" width="1" height="1" fill="#fff"/>
<rect x="522" y="48" width="1" height="1" fill="#fff"/>
<rect x="528" y="48" width="1" height="1" fill="#fff"/>
<rect x="534" y="48" width="1" height="1" fill="#fff"/>
<rect x="540" y="48" width="1" height="1" fill="#fff"/>
<rect x="546" y="48" width="1" height="1" fill="#fff"/>
<rect x="552" y="48" width="1" height="1" fill="#fff"/>
<rect x="558" y="48" width="1" height="1" fill="#fff"/>
<rect x="564" y="48" width="1" height="1" fill="#fff"/>
<rect x="570" y="48" width="1" height="1" fill="#fff"/>
<rect x="576" y="48" width="1" height="1" fill="#fff"/>
<rect x="582" y="48" width="1" height="1" fill="#fff"/>
<rect x="588" y="48" width="1" height="1" fill="#fff"/>
<rect x="594" y="48" width="1" height="1" fill="#fff"/>
<rect x="600" y="48" width="1" height="1" fill="#fff"/>
<rect x="606" y="48" width="1" height="1" fill="#fff"/>
<rect x="612" y="48" width="1" height="1" fill="#fff"/>
<rect x="618" y="48" width="1" height="1" fill="#fff"/>
<rect x="624" y="48" width="1" height="1" fill="#fff"/>
<rect x="630" y="48" width="1" height="1" fill="#fff"/>
<rect x="636" y="48" width="1" height="1" fill="#fff"/>
<rect x="642" y="48" width="1" height="1" fill="#fff"/>
<rect x="648" y="48" width="1" height="1" fill="#fff"/>
<rect x="654" y="48" width="1" height="1" fill="#fff"/>
<rect x="660" y="48" width="1" height="1" fill="#fff"/>
<rect x="666" y="48" width="1" height="1" fill="#fff"/>
<rect x="114" y="57" width="1" height="1" fill="#fff"/>
<rect x="120" y="57" width="1" height="1" fill="#fff"/>
<rect x="126" y="57" width="1" height="1" fill="#fff"/>
<rect x="132" y="57" width="1" height="1" fill="#fff"/>
<rect x="138" y="57" width="1" height="1" fill="#fff"/>
<rect x="144" y="57" width="1" height="1" fill="#fff"/>
<rect x="150" y="57" width="1" height="1" fill="#fff"/>
<rect x="156" y="57" width="1" height="1" fill="#fff"/>
<rect x="162" y="57" width="1" height="1" fill="#fff"/>
<rect x="168" y="57" width="1" height="1" fill="#fff"/>
<rect x="174" y="57" width="1" height="1" fill="#fff"/>
<rect x="180" y="57" width="1" height="1" fill="#fff"/>
<rect x="186" y="57" width="1" height="1" fill="#fff"/>
<rect x="192" y="57" width="1" height="1" fill="#fff"/>
<rect x="198" y="57" width="1" height="1" fill="#fff"/>
<rect x="204" y="57" width="1" height="1" fill="#fff"/>
<rect x="210" y="57" width="1" height="1" fill="#fff"/>
<rect x="216" y="57" width="1" height="1" fill="#fff"/>
<rect x="222" y="57" width="1" height="1" fill="#fff"/>
<rect x="228" y="57" width="1" height="1" fill="#fff"/>
<rect x="234" y="57" width="1" height="1" fill="#fff"/>
<rect x="240" y="57" width="1" height="1" fill="#fff"/>
<rect x="246" y="57" width="1" height="1" fill="#fff"/>
<rect x="252" y="57" width="1" height="1" fill="#fff"/>
<rect x="258" y="57" width="1" height="1" fill="#fff"/>
<rect x="264" y="57" width="1" height="1" fill="#fff"/>
<rect x="270" y="57" width="1" height="1" fill="#fff"/>
<rect x="276" y="57" width="1" height="1" fill="#fff"/>
<rect x="282" y="57" width="1" height="1" fill="#fff"/>
<rect x="288" y="57" width="1" height="1" fill="#fff"/>
<rect x="294" y="57" width="1" height="1" fill="#fff"/>
<rect x="300" y="57" width="1" height="1" fill="#fff"/>
<rect x="306" y="57" width="1" height="1" fill="#fff"/>
<rect x="312" y="57" width="1" height="1" fill="#fff"/>
<rect x="318" y="57" width="1" height="1" fill="#fff"/>
<rect x="324" y="57" width="1" height="1" fill="#fff"/>
<rect x="330" y="57" width="1" height="1" fill="#fff"/>
<rect x="336" y="57" width="1" height="1" fill="#fff"/>
<rect x="342" y="57" width="1" height="1" fill="#fff"/>
<rect x="348" y="57" width="1" height="1" fill="#fff"/>
<rect x="354" y="57" width="1" height="1" fill="#fff"/>
<rect x="360" y="57" width="1" height="1" fill="#fff"/>
<rect x="366" y="57" width="1" height="1" fill="#fff"/>
<rect x="372" y="57" width="1" height="1" fill="#fff"/>
<rect x="378" y="57" width="1" height="1" fill="#fff"/>
<rect x="384" y="57" width="1" height="1" fill="#fff"/>
<rect x="390" y="57" width="1" height="1" fill="#fff"/>
<rect x="396" y="57" width="1" height="1" fill="#fff"/>
<rect x="402" y="57" width="1" height="1" fill="#fff"/>
<rect x="408" y="57" width="1" height="1" fill="#fff"/>
<rect x="414" y="57" width="1" height="1" fill="#fff"/>
<rect x="420" y="57" width="1" height="1" fill="#fff"/>
<rect x="426" y="57" width="1" height="1" fill="#fff"/>
<rect x="432" y="57" width="1" height="1" fill="#fff"/>
<rect x="438" y="57" width="1" height="1" fill="#fff"/>
<rect x="444" y="57" width="1" height="1" fill="#fff"/>
<rect x="450" y="57" width="1" height="1" fill="#fff"/>
<rect x="456" y="57" width="1" height="1" fill="#fff"/>
<rect x="462" y="57" width="1" height="1" fill="#fff"/>
<rect x="468" y="57" width="1" height="1" fill="#fff"/>
<rect x="474" y="57" width="1" height="1" fill="#fff"/>
<rect x="480" y="57" width="1" height="1" fill="#fff"/>
<rect x="486" y="57" width="1" height="1" fill="#fff"/>
<rect x="492" y="57" width="1" height="1" fill="#fff"/>
<rect x="498" y="57" width="1" height="1" fill="#fff"/>
<rect x="504" y="57" width="1" height="1" fill="#fff"/>
<rect x="510" y="57" width="1" height="1" fill="#fff"/>
<rect x="516" y="57" width="1" height="1" fill="#fff"/>
<rect x="522" y="57" width="1" height="1" fill="#fff"/>
<rect x="528" y="57" width="1" height="1" fill="#fff"/>
<rect x="534" y="57" width="1" height="1" fill="#fff"/>
<rect x="540" y="57" width="1" height="1" fill="#fff"/>
<rect x="546" y="57" width="1" height="1" fill="#fff"/>
<rect x="552" y="57" width="1" height="1" fill="#fff"/>
<rect x="558" y="57" width="1" height="1" fill="#fff"/>
<rect x="564" y="57" width="1" height="1" fill="#fff"/>
<rect x="570" y="57" width="1" height="1" fill="#fff"/>
<rect x="576" y="57" width="1" height="1" fill="#fff"/>
<rect x="582" y="57" width="1" height="1" fill="#fff"/>
<rect x="588" y="57" width="1" height="1" fill="#fff"/>
<rect x="594" y="57" width="1" height="1" fill="#fff"/>
<rect x="600" y="57" width="1" height="1" fill="#fff"/>
<rect x="606" y="57" width="1" height="1" fill="#fff"/>
<rect x="612" y="57" width="1" height="1" fill="#fff"/>
<rect x="618" y="57" width="1" height="1" fill="#fff"/>
<rect x="624" y="57" width="1" height="1" fill="#fff"/>
<rect x="630" y="57" width="1" height="1" fill="#fff"/>
<rect x="636" y="57" width="1" height="1" fill="#fff"/>
<rect x="642" y="57" width="1" height="1" fill="#fff"/>
<rect x="648" y="57" width="1" height="1" fill="#fff"/>
<rect x="654" y="57" width="1" height="1" fill="#fff"/>
<rect x="660" y="57" width="1" height="1" fill="#fff"/>
<rect x="666" y="57" width="1" height="1" fill="#fff"/>
<rect x="114" y="66" width="1" height="1" fill="#fff"/>
<rect x="120" y="66" width="1" height="1" fill="#fff"/>
<rect x="126" y="66" width="1" height="1" fill="#fff"/>
<rect x="132" y="66" width="1" height="1" fill="#fff"/>
<rect x="138" y="66" width="1" height="1" fill="#fff"/>
<rect x="144" y="66" width="1" height="1" fill="#fff"/>
<rect x="150" y="66" width="1" height="1" fill="#fff"/>
<rect x="156" y="66" width="1" height="1" fill="#fff"/>
<rect x="162" y="66" width="1" height="1" fill="#fff"/>
<rect x="168" y="66" width="1" height="1" fill="#fff"/>
<rect x="174" y="66" width="1" height="1" fill="#fff"/>
<rect x="180" y="66" width="1" height="1" fill="#fff"/>
<rect x="186" y="66" width="1" height="1" fill="#fff"/>
<rect x="192" y="66" width="1" height="1" fill="#fff"/>
<rect x="198" y="66" width="1" height="1" fill="#fff"/>
<rect x="204" y="66" width="1" height="1" fill="#fff"/>
<rect x="210" y="66" width="1" height="1" fill="#fff"/>
<rect x="216" y="66" width="1" height="1" fill="#fff"/>
<rect x="222" y="66" width="1" height="1" fill="#fff"/>
<rect x="228" y="66" width="1" height="1" fill="#fff"/>
<rect x="234" y="66" width="1" height="1" fill="#fff"/>
<rect x="240" y="66" width="1" height="1" fill="#fff"/>
<rect x="246" y="66" width="1" height="1" fill="#fff"/>
<rect x="252" y="66" width="1" height="1" fill="#fff"/>
<rect x="258" y="66" width="1" height="1" fill="#fff"/>
<rect x="264" y="66" width="1" height="1" fill="#fff"/>
<rect x="270" y="66" width="1" height="1" fill="#fff"/>
<rect x="276" y="66" width="1" height="1" fill="#fff"/>
<rect x="282" y="66" width="1" height="1" fill="#fff"/>
<rect x="288" y="66" width="1" height="1" fill="#fff"/>
<rect x="294" y="66" width="1" height="1" fill="#fff"/>
<rect x="300" y="66" width="1" height="1" fill="#fff"/>
<rect x="306" y="66" width="1" height="1" fill="#fff"/>
<rect x="312" y="66" width="1" height="1" fill="#fff"/>
<rect x="318" y="66" width="1" height="1" fill="#fff"/>
<rect x="324" y="66" width="1" height="1" fill="#fff"/>
<rect x="330" y="66" width="1" height="1" fill="#fff"/>
<rect x="336" y="66" width="1" height="1" fill="#fff"/>
<rect x="342" y="66" width="1" height="1" fill="#fff"/>
<rect x="348" y="66" width="1" height="1" fill="#fff"/>
<rect x="354" y="66" width="1" height="1" fill="#fff"/>
<rect x="360" y="66" width="1" height="1" fill="#fff"/>
<rect x="366" y="66" width="1" height="1" fill="#fff"/>
<rect x="372" y="66" width="1" height="1" fill="#fff"/>
<rect x="378" y="66" width="1" height="1" fill="#fff"/>
<rect x="384" y="66" width="1" height="1" fill="#fff"/>
<rect x="390" y="66" width="1" height="1" fill="#fff"/>
<rect x="396" y="66" width="1" height="1" fill="#fff"/>
<rect x="402" y="66" width="1" height="1" fill="#fff"/>
<rect x="408" y="66" width="1" height="1" fill="#fff"/>
<rect x="414" y="66" width="1" height="1" fill="#fff"/>
<rect x="420" y="66" width="1" height="1" fill="#fff"/>
<rect x="426" y="66" width="1" height="1" fill="#fff"/>
<rect x="432" y="66" width="1" height="1" fill="#fff"/>
<rect x="438" y="66" width="1" height="1" fill="#fff"/>
<rect x="444" y="66" width="1" height="1" fill="#fff"/>
<rect x="450" y="66" width="1" height="1" fill="#fff"/>
<rect x="456" y="66" width="1" height="1" fill="#fff"/>
<rect x="462" y="66" width="1" height="1" fill="#fff"/>
<rect x="468" y="66" width="1" height="1" fill="#fff"/>
<rect x="474" y="66" width="1" height="1" fill="#fff"/>
<rect x="480" y="66" width="1" height="1" fill="#fff"/>
<rect x="486" y="66" width="1" height="1" fill="#fff"/>
<rect x="492" y="66" width="1" height="1" fill="#fff"/>
<rect x="498" y="66" width="1" height="1" fill="#fff"/>
<rect x="504" y="66" width="1" height="1" fill="#fff"/>
<rect x="510" y="66" width="1" height="1" fill="#fff"/>
<rect x="516" y="66" width="1" height="1" fill="#fff"/>
<rect x="522" y="66" width="1" height="1" fill="#fff"/>
<rect x="528" y="66" width="1" height="1" fill="#fff"/>
<rect x="534" y="66" width="1" height="1" fill="#fff"/>
<rect x="540" y="66" width="1" height="1" fill="#fff"/>
<rect x="546" y="66" width="1" height="1" fill="#fff"/>
<rect x="552" y="66" width="1" height="1" fill="#fff"/>
<rect x="558" y="66" width="1" height="1" fill="#fff"/>
<rect x="564" y="66" width="1" height="1" fill="#fff"/>
<rect x="570" y="66" width="1" height="1" fill="#fff"/>
<rect x="576" y="66" width="1" height="1" fill="#fff"/>
<rect x="582" y="66" width="1" height="1" fill="#fff"/>
<rect x="588" y="66" width="1" height="1" fill="#fff"/>
<rect x="594" y="66" width="1" height="1" fill="#fff"/>
<rect x="600" y="66" width="1" height="1" fill="#fff"/>
<rect x="606" y="66" width="1" height="1" fill="#fff"/>
<rect x="612" y="66" width="1" height="1" fill="#fff"/>
<rect x="618" y="66" width="1" height="1" fill="#fff"/>
<rect x="624" y="66" width="1" height="1" fill="#fff"/>
<rect x="630" y="66" width="1" height="1" fill="#fff"/>
<rect x="636" y="66" width="1" height="1" fill="#fff"/>
<rect x="642" y="66" width="1" height="1" fill="#fff"/>
<rect x="648" y="66" width="1" height="1" fill="#fff"/>
<rect x="654" y="66" width="1" height="1" fill="#fff"/>
<rect x="660" y="66" width="1" height="1" fill="#fff"/>
<rect x="666" y="66" width="1" height="1" fill="#fff"/>
<rect x="114" y="427" width="1" height="1" fill="#fff"/>
<rect x="120" y="427" width="1" height="1" fill="#fff"/>
<rect x="126" y="427" width="1" height="1" fill="#fff"/>
<rect x="132" y="427" width="1" height="1" fill="#fff"/>
<rect x="138" y="427" width="1" height="1" fill="#fff"/>
<rect x="144" y="427" width="1" height="1" fill="#fff"/>
<rect x="150" y="427" width="1" height="1" fill="#fff"/>
<rect x="156" y="427" width="1" height="1" fill="#fff"/>
<rect x="162" y="427" width="1" height="1" fill="#fff"/>
<rect x="168" y="427" width="1" height="1" fill="#fff"/>
<rect x="174" y="427" width="1" height="1" fill="#fff"/>
<rect x="180" y="427" width="1" height="1" fill="#fff"/>
<rect x="186" y="427" width="1" height="1" fill="#fff"/>
<rect x="192" y="427" width="1" height="1" fill="#fff"/>
<rect x="198" y="427" width="1" height="1" fill="#fff"/>
<rect x="204" y="427" width="1" height="1" fill="#fff"/>
<rect x="210" y="427" width="1" height="1" fill="#fff"/>
<rect x="216" y="427" width="1" height="1" fill="#fff"/>
<rect x="222" y="427" width="1" height="1" fill="#fff"/>
<rect x="228" y="427" width="1" height="1" fill="#fff"/>
<rect x="234" y="427" width="1" height="1" fill="#fff"/>
<rect x="240" y="427" width="1" height="1" fill="#fff"/>
<rect x="246" y="427" width="1" height="1" fill="#fff"/>
<rect x="252" y="427" width="1" height="1" fill="#fff"/>
<rect x="258" y="427" width="1" height="1" fill="#fff"/>
<rect x="264" y="427" width="1" height="1" fill="#fff"/>
<rect x="270" y="427" width="1" height="1" fill="#fff"/>
<rect x="276" y="427" width="1" height="1" fill="#fff"/>
<rect x="282" y="427" width="1" height="1" fill="#fff"/>
<rect x="288" y="427" width="1" height="1" fill="#fff"/>
<rect x="294" y="427" width="1" height="1" fill="#fff"/>
<rect x="300" y="427" width="1" height="1" fill="#fff"/>
<rect x="306" y="427" width="1" height="1" fill="#fff"/>
<rect x="312" y="427" width="1" height="1" fill="#fff"/>
<rect x="318" y="427" width="1" height="1" fill="#fff"/>
<rect x="324" y="427" width="1" height="1" fill="#fff"/>
<rect x="330" y="427" width="1" height="1" fill="#fff"/>
<rect x="336" y="427" width="1" height="1" fill="#fff"/>
<rect x="342" y="427" width="1" height="1" fill="#fff"/>
<rect x="348" y="427" width="1" height="1" fill="#fff"/>
<rect x="354" y="427" width="1" height="1" fill="#fff"/>
<rect x="360" y="427" width="1" height="1" fill="#fff"/>
<rect x="366" y="427" width="1" height="1" fill="#fff"/>
<rect x="372" y="427" width="1" height="1" fill="#fff"/>
<rect x="378" y="427" width="1" height="1" fill="#fff"/>
<rect x="384" y="427" width="1" height="1" fill="#fff"/>
<rect x="390" y="427" width="1" height="1" fill="#fff"/>
<rect x="396" y="427" width="1" height="1" fill="#fff"/>
<rect x="402" y="427" width="1" height="1" fill="#fff"/>
<rect x="408" y="427" width="1" height="1" fill="#fff"/>
<rect x="414" y="427" width="1" height="1" fill="#fff"/>
<rect x="420" y="427" width="1" height="1" fill="#fff"/>
<rect x="426" y="427" width="1" height="1" fill="#fff"/>
<rect x="432" y="427" width="1" height="1" fill="#fff"/>
<rect x="438" y="427" width="1" height="1" fill="#fff"/>
<rect x="444" y="427" width="1" height="1" fill="#fff"/>
<rect x="450" y="427" width="1" height="1" fill="#fff"/>
<rect x="456" y="427" width="1" height="1" fill="#fff"/>
<rect x="462" y="427" width="1" height="1" fill="#fff"/>
<rect x="468" y="427" width="1" height="1" fill="#fff"/>
<rect x="474" y="427" width="1" height="1" fill="#fff"/>
<rect x="480" y="427" width="1" height="1" fill="#fff"/>
<rect x="486" y="427" width="1" height="1" fill="#fff"/>
<rect x="492" y="427" width="1" height="1" fill="#fff"/>
<rect x="498" y="427" width="1" height="1" fill="#fff"/>
<rect x="504" y="427" width="1" height="1" fill="#fff"/>
<rect x="510" y="427" width="1" height="1" fill="#fff"/>
<rect x="516" y="427" width="1" height="1" fill="#fff"/>
<rect x="522" y="427" width="1" height="1" fill="#fff"/>
<rect x="528" y="427" width="1" height="1" fill="#fff"/>
<rect x="534" y="427" width="1" height="1" fill="#fff"/>
<rect x="540" y="427" width="1" height="1" fill="#fff"/>
<rect x="546" y="427" width="1" height="1" fill="#fff"/>
<rect x="552" y="427" width="1" height="1" fill="#fff"/>
<rect x="558" y="427" width="1" height="1" fill="#fff"/>
<rect x="564" y="427" width="1" height="1" fill="#fff"/>
<rect x="570" y="427" width="1" height="1" fill="#fff"/>
<rect x="576" y="427" width="1" height="1" fill="#fff"/>
<rect x="582" y="427" width="1" height="1" fill="#fff"/>
<rect x="588" y="427" width="1" height="1" fill="#fff"/>
<rect x="594" y="427" width="1" height="1" fill="#fff"/>
<rect x="600" y="427" width="1" height="1" fill="#fff"/>
<rect x="606" y="427" width="1" height="1" fill="#fff"/>
<rect x="612" y="427" width="1" height="1" fill="#fff"/>
<rect x="618" y="427" width="1" height="1" fill="#fff"/>
<rect x="624" y="427" width="1" height="1" fill="#fff"/>
<rect x="630" y="427" width="1" height="1" fill="#fff"/>
<rect x="636" y="427" width="1" height="1" fill="#fff"/>
<rect x="642" y="427" width="1" height="1" fill="#fff"/>
<rect x="648" y="427" width="1" height="1" fill="#fff"/>
<rect x="654" y="427" width="1" height="1" fill="#fff"/>
<rect x="660" y="427" width="1" height="1" fill="#fff"/>
<rect x="666" y="427" width="1" height="1" fill="#fff"/>
<rect x="114" y="439" width="1" height="1" fill="#fff"/>
<rect x="120" y="439" width="1" height="1" fill="#fff"/>
<rect x="126" y="439" width="1" height="1" fill="#fff"/>
<rect x="132" y="439" width="1" height="1" fill="#fff"/>
<rect x="138" y="439" width="1" height="1" fill="#fff"/>
<rect x="144" y="439" width="1" height="1" fill="#fff"/>
<rect x="150" y="439" width="1" height="1" fill="#fff"/>
<rect x="156" y="439" width="1" height="1" fill="#fff"/>
<rect x="162" y="439" width="1" height="1" fill="#fff"/>
<rect x="168" y="439" width="1" height="1" fill="#fff"/>
<rect x="174" y="439" width="1" height="1" fill="#fff"/>
<rect x="180" y="439" width="1" height="1" fill="#fff"/>
<rect x="186" y="439" width="1" height="1" fill="#fff"/>
<rect x="192" y="439" width="1" height="1" fill="#fff"/>
<rect x="198" y="439" width="1" height="1" fill="#fff"/>
<rect x="204" y="439" width="1" height="1" fill="#fff"/>
<rect x="210" y="439" width="1" height="1" fill="#fff"/>
<rect x="216" y="439" width="1" height="1" fill="#fff"/>
<rect x="222" y="439" width="1" height="1" fill="#fff"/>
<rect x="228" y="439" width="1" height="1" fill="#fff"/>
<rect x="234" y="439" width="1" height="1" fill="#fff"/>
<rect x="240" y="439" width="1" height="1" fill="#fff"/>
<rect x="246" y="439" width="1" height="1" fill="#fff"/>
<rect x="252" y="439" width="1" height="1" fill="#fff"/>
<rect x="258" y="439" width="1" height="1" fill="#fff"/>
<rect x="264" y="439" width="1" height="1" fill="#fff"/>
<rect x="270" y="439" width="1" height="1" fill="#fff"/>
<rect x="276" y="439" width="1" height="1" fill="#fff"/>
<rect x="282" y="439" width="1" height="1" fill="#fff"/>
<rect x="288" y="439" width="1" height="1" fill="#fff"/>
<rect x="294" y="439" width="1" height="1" fill="#fff"/>
<rect x="300" y="439" width="1" height="1" fill="#fff"/>
<rect x="306" y="439" width="1" height="1" fill="#fff"/>
<rect x="312" y="439" width="1" height="1" fill="#fff"/>
<rect x="318" y="439" width="1" height="1" fill="#fff"/>
<rect x="324" y="439" width="1" height="1" fill="#fff"/>
<rect x="330" y="439" width="1" height="1" fill="#fff"/>
<rect x="336" y="439" width="1" height="1" fill="#fff"/>
<rect x="342" y="439" width="1" height="1" fill="#fff"/>
<rect x="348" y="439" width="1" height="1" fill="#fff"/>
<rect x="354" y="439" width="1" height="1" fill="#fff"/>
<rect x="360" y="439" width="1" height="1" fill="#fff"/>
<rect x="366" y="439" width="1" height="1" fill="#fff"/>
<rect x="372" y="439" width="1" height="1" fill="#fff"/>
<rect x="378" y="439" width="1" height="1" fill="#fff"/>
<rect x="384" y="439" width="1" height="1" fill="#fff"/>
<rect x="390" y="439" width="1" height="1" fill="#fff"/>
<rect x="396" y="439" width="1" height="1" fill="#fff"/>
<rect x="402" y="439" width="1" height="1" fill="#fff"/>
<rect x="408" y="439" width="1" height="1" fill="#fff"/>
<rect x="414" y="439" width="1" height="1" fill="#fff"/>
<rect x="420" y="439" width="1" height="1" fill="#fff"/>
<rect x="426" y="439" width="1" height="1" fill="#fff"/>
<rect x="432" y="439" width="1" height="1" fill="#fff"/>
<rect x="438" y="439" width="1" height="1" fill="#fff"/>
<rect x="444" y="439" width="1" height="1" fill="#fff"/>
<rect x="450" y="439" width="1" height="1" fill="#fff"/>
<rect x="456" y="439" width="1" height="1" fill="#fff"/>
<rect x="462" y="439" width="1" height="1" fill="#fff"/>
<rect x="468" y="439" width="1" height="1" fill="#fff"/>
<rect x="474" y="439" width="1" height="1" fill="#fff"/>
<rect x="480" y="439" width="1" height="1" fill="#fff"/>
<rect x="486" y="439" width="1" height="1" fill="#fff"/>
<rect x="492" y="439" width="1" height="1" fill="#fff"/>
<rect x="498" y="439" width="1" height="1" fill="#fff"/>
<rect x="504" y="439" width="1" height="1" fill="#fff"/>
<rect x="510" y="439" width="1" height="1" fill="#fff"/>
<rect x="516" y="439" width="1" height="1" fill="#fff"/>
<rect x="522" y="439" width="1" height="1" fill="#fff"/>
<rect x="528" y="439" width="1" height="1" fill="#fff"/>
<rect x="534" y="439" width="1" height="1" fill="#fff"/>
<rect x="540" y="439" width="1" height="1" fill="#fff"/>
<rect x="546" y="439" width="1" height="1" fill="#fff"/>
<rect x="552" y="439" width="1" height="1" fill="#fff"/>
<rect x="558" y="439" width="1" height="1" fill="#fff"/>
<rect x="564" y="439" width="1" height="1" fill="#fff"/>
<rect x="570" y="439" width="1" height="1" fill="#fff"/>
<rect x="576" y="439" width="1" height="1" fill="#fff"/>
<rect x="582" y="439" width="1" height="1" fill="#fff"/>
<rect x="588" y="439" width="1" height="1" fill="#fff"/>
<rect x="594" y="439" width="1" height="1" fill="#fff"/>
<rect x="600" y="439" width="1" height="1" fill="#fff"/>
<rect x="606" y="439" width="1" height="1" fill="#fff"/>
<rect x="612" y="439" width="1" height="1" fill="#fff"/>
<rect x="618" y="439" width="1" height="1" fill="#fff"/>
<rect x="624" y="439" width="1" height="1" fill="#fff"/>
<rect x="630" y="439" width="1" height="1" fill="#fff"/>
<rect x="636" y="439" width="1" height="1" fill="#fff"/>
<rect x="642" y="439" width="1" height="1" fill="#fff"/>
<rect x="648" y="439" width="1" height="1" fill="#fff"/>
<rect x="654" y="439" width="1" height="1" fill="#fff"/>
<rect x="660" y="439" width="1" height="1" fill="#fff"/>
<rect x="666" y="439" width="1" height="1" fill="#fff"/>
<rect x="114" y="472" width="1" height="1" fill="#fff"/>
<rect x="120" y="472" width="1" height="1" fill="#fff"/>
<rect x="126" y="472" width="1" height="1" fill="#fff"/>
<rect x="132" y="472" width="1" height="1" fill="#fff"/>
<rect x="138" y="472" width="1" height="1" fill="#fff"/>
<rect x="144" y="472" width="1" height="1" fill="#fff"/>
<rect x="150" y="472" width="1" height="1" fill="#fff"/>
<rect x="156" y="472" width="1" height="1" fill="#fff"/>
<rect x="162" y="472" width="1" height="1" fill="#fff"/>
<rect x="168" y="472" width="1" height="1" fill="#fff"/>
<rect x="174" y="472" width="1" height="1" fill="#fff"/>
<rect x="180" y="472" width="1" height="1" fill="#fff"/>
<rect x="186" y="472" width="1" height="1" fill="#fff"/>
<rect x="192" y="472" width="1" height="1" fill="#fff"/>
<rect x="198" y="472" width="1" height="1" fill="#fff"/>
<rect x="204" y="472" width="1" height="1" fill="#fff"/>
<rect x="210" y="472" width="1" height="1" fill="#fff"/>
<rect x="216" y="472" width="1" height="1" fill="#fff"/>
<rect x="222" y="472" width="1" height="1" fill="#fff"/>
<rect x="228" y="472" width="1" height="1" fill="#fff"/>
<rect x="234" y="472" width="1" height="1" fill="#fff"/>
<rect x="240" y="472" width="1" height="1" fill="#fff"/>
<rect x="246" y="472" width="1" height="1" fill="#fff"/>
<rect x="252" y="472" width="1" height="1" fill="#fff"/>
<rect x="258" y="472" width="1" height="1" fill="#fff"/>
<rect x="264" y="472" width="1" height="1" fill="#fff"/>
<rect x="270" y="472" width="1" height="1" fill="#fff"/>
<rect x="276" y="472" width="1" height="1" fill="#fff"/>
<rect x="282" y="472" width="1" height="1" fill="#fff"/>
<rect x="288" y="472" width="1" height="1" fill="#fff"/>
<rect x="294" y="472" width="1" height="1" fill="#fff"/>
<rect x="300" y="472" width="1" height="1" fill="#fff"/>
<rect x="306" y="472" width="1" height="1" fill="#fff"/>
<rect x="312" y="472" width="1" height="1" fill="#fff"/>
<rect x="318" y="472" width="1" height="1" fill="#fff"/>
<rect x="324" y="472" width="1" height="1" fill="#fff"/>
<rect x="330" y="472" width="1" height="1" fill="#fff"/>
<rect x="336" y="472" width="1" height="1" fill="#fff"/>
<rect x="342" y="472" width="1" height="1" fill="#fff"/>
<rect x="348" y="472" width="1" height="1" fill="#fff"/>
<rect x="354" y="472" width="1" height="1" fill="#fff"/>
<rect x="360" y="472" width="1" height="1" fill="#fff"/>
<rect x="366" y="472" width="1" height="1" fill="#fff"/>
<rect x="372" y="472" width="1" height="1" fill="#fff"/>
<rect x="378" y="472" width="1" height="1" fill="#fff"/>
<rect x="384" y="472" width="1" height="1" fill="#fff"/>
<rect x="390" y="472" width="1" height="1" fill="#fff"/>
<rect x="396" y="472" width="1" height="1" fill="#fff"/>
<rect x="402" y="472" width="1" height="1" fill="#fff"/>
<rect x="408" y="472" width="1" height="1" fill="#fff"/>
<rect x="414" y="472" width="1" height="1" fill="#fff"/>
<rect x="420" y="472" width="1" height="1" fill="#fff"/>
<rect x="426" y="472" width="1" height="1" fill="#fff"/>
<rect x="432" y="472" width="1" height="1" fill="#fff"/>
<rect x="438" y="472" width="1" height="1" fill="#fff"/>
<rect x="444" y="472" width="1" height="1" fill="#fff"/>
<rect x="450" y="472" width="1" height="1" fill="#fff"/>
<rect x="456" y="472" width="1" height="1" fill="#fff"/>
<rect x="462" y="472" width="1" height="1" fill="#fff"/>
<rect x="468" y="472" width="1" height="1" fill="#fff"/>
<rect x="474" y="472" width="1" height="1" fill="#fff"/>
<rect x="480" y="472" width="1" height="1" fill="#fff"/>
<rect x="486" y="472" width="1" height="1" fill="#fff"/>
<rect x="492" y="472" width="1" height="1" fill="#fff"/>
<rect x="498" y="472" width="1" height="1" fill="#fff"/>
<rect x="504" y="472" width="1" height="1" fill="#fff"/>
<rect x="510" y="472" width="1" height="1" fill="#fff"/>
<rect x="516" y="472" width="1" height="1" fill="#fff"/>
<rect x="522" y="472" width="1" height="1" fill="#fff"/>
<rect x="528" y="472" width="1" height="1" fill="#fff"/>
<rect x="534" y="472" width="1" height="1" fill="#fff"/>
<rect x="540" y="472" width="1" height="1" fill="#fff"/>
<rect x="546" y="472" width="1" height="1" fill="#fff"/>
<rect x="552" y="472" width="1" height="1" fill="#fff"/>
<rect x="558" y="472" width="1" height="1" fill="#fff"/>
<rect x="564" y="472" width="1" height="1" fill="#fff"/>
<rect x="570" y="472" width="1" height="1" fill="#fff"/>
<rect x="576" y="472" width="1" height="1" fill="#fff"/>
<rect x="582" y="472" width="1" height="1" fill="#fff"/>
<rect x="588" y="472" width="1" height="1" fill="#fff"/>
<rect x="594" y="472" width="1" height="1" fill="#fff"/>
<rect x="600" y="472" width="1" height="1" fill="#fff"/>
<rect x="606" y="472" width="1" height="1" fill="#fff"/>
<rect x="612" y="472" width="1" height="1" fill="#fff"/>
<rect x="618" y="472" width="1" height="1" fill="#fff"/>
<rect x="624" y="472" width="1" height="1" fill="#fff"/>
<rect x="630" y="472" width="1" height="1" fill="#fff"/>
<rect x="636" y="472" width="1" height="1" fill="#fff"/>
<rect x="642" y="472" width="1" height="1" fill="#fff"/>
<rect x="648" y="472" width="1" height="1" fill="#fff"/>
<rect x="654" y="472" width="1" height="1" fill="#fff"/>
<rect x="660" y="472" width="1" height="1" fill="#fff"/>
<rect x="666" y="472" width="1" height="1" fill="#fff"/>
<polygon fill="#fff" points="109,484 109,471 115,471 115,470 116,470 116,469 117,469 117,464 119,464 119,469 120,469 120,472 121,472 121,475 122,475 122,476 123,476 123,477 124,477 124,478 125,478 125,473 126,473 126,472 127,472 127,478 128,478 128,482 130,482 130,481 131,481 131,482 132,482 132,473 133,473 133,475 134,475 134,474 135,474 135,469 136,469 136,461 137,461 137,452 139,452 139,456 140,456 140,452 141,452 141,451 142,451 142,455 143,455 143,458 144,458 144,460 145,460 145,462 147,462 147,466 148,466 148,461 149,461 149,458 150,458 150,457 151,457 151,456 152,456 152,459 153,459 153,460 154,460 154,461 155,461 155,465 156,465 156,460 158,460 158,465 159,465 159,468 160,468 160,469 161,469 161,471 162,471 162,472 163,472 163,475 164,475 164,477 165,477 165,480 166,480 166,482 167,482 167,483 168,483 168,482 169,482 169,481 170,481 170,483 171,483 171,478 172,478 172,473 174,473 174,478 175,478 175,483 177,483 177,481 178,481 178,483 179,483 179,474 180,474 180,472 181,472 181,474 182,474 182,468 183,468 183,461 184,461 184,452 186,452 186,457 187,457 187,452 188,452 188,451 189,451 189,455 190,455 190,458 191,458 191,460 192,460 192,462 194,462 194,467 195,467 195,461 197,461 197,466 198,466 198,469 199,469 199,470 200,470 200,472 201,472 201,473 202,473 202,477 203,477 203,471 205,471 205,477 206,477 206,479 207,479 207,481 208,481 208,480 209,480 209,482 210,482 210,478 211,478 211,473 213,473 213,478 214,478 214,481 215,481 215,483 218,483 218,477 219,477 219,473 220,473 220,475 221,475 221,480 222,480 222,482 223,482 223,483 224,483 224,481 225,481 225,482 226,482 226,474 227,474 227,472 228,472 228,474 229,474 229,468 230,468 230,461 231,461 231,452 233,452 233,457 234,457 234,452 235,452 235,451 236,451 236,455 237,455 237,458 238,458 238,460 239,460 239,462 241,462 241,467 242,467 242,461 244,461 244,466 245,466 245,469 246,469 246,470 247,470 247,472 248,472 248,473 249,473 249,477 250,477 250,471 252,471 252,477 253,477 253,479 254,479 254,481 255,481 255,480 256,480 256,482 257,482 257,478 258,478 258,473 260,473 260,478 261,478 261,481 262,481 262,483 265,483 265,477 266,477 266,473 267,473 267,475 268,475 268,480 269,480 269,482 270,482 270,483 271,483 271,481 272,481 272,482 273,482 273,474 274,474 274,472 275,472 275,474 276,474 276,468 277,468 277,461 278,461 278,452 280,452 280,457 281,457 281,452 282,452 282,451 283,451 283,455 284,455 284,458 285,458 285,460 286,460 286,462 288,462 288,467 289,467 289,461 291,461 291,466 292,466 292,469 293,469 293,470 294,470 294,472 295,472 295,473 296,473 296,477 297,477 297,471 299,471 299,477 300,477 300,479 301,479 301,481 302,481 302,480 303,480 303,482 304,482 304,478 305,478 305,473 307,473 307,478 308,478 308,481 309,481 309,483 312,483 312,477 313,477 313,473 314,473 314,475 315,475 315,480 316,480 316,482 317,482 317,483 318,483 318,481 319,481 319,482 320,482 320,474 321,474 321,472 322,472 322,473 323,473 323,467 324,467 324,461 325,461 325,452 327,452 327,457 328,457 328,451 330,451 330,455 331,455 331,458 332,458 332,460 333,460 333,462 335,462 335,466 336,466 336,461 337,461 337,458 338,458 338,456 340,456 340,459 341,459 341,461 342,461 342,462 343,462 343,464 344,464 344,460 346,460 346,465 347,465 347,468 348,468 348,471 349,471 349,473 350,473 350,475 351,475 351,478 352,478 352,481 353,481 353,483 354,483 354,481 355,481 355,483 359,483 359,474 360,474 360,472 361,472 361,476 362,476 362,481 363,481 363,483 367,483 367,473 369,473 369,474 370,474 370,468 371,468 371,461 372,461 372,452 374,452 374,457 375,457 375,452 376,452 376,451 377,451 377,455 378,455 378,458 379,458 379,460 380,460 380,462 382,462 382,467 383,467 383,461 385,461 385,466 386,466 386,469 387,469 387,470 388,470 388,472 389,472 389,473 390,473 390,477 391,477 391,471 393,471 393,477 394,477 394,479 395,479 395,481 396,481 396,480 397,480 397,482 398,482 398,478 399,478 399,473 401,473 401,478 402,478 402,481 403,481 403,483 406,483 406,477 407,477 407,473 408,473 408,475 409,475 409,480 410,480 410,482 411,482 411,483 412,483 412,481 413,481 413,482 414,482 414,474 415,474 415,472 416,472 416,474 417,474 417,468 418,468 418,461 419,461 419,452 421,452 421,457 422,457 422,452 423,452 423,451 424,451 424,455 425,455 425,458 426,458 426,460 427,460 427,462 429,462 429,467 430,467 430,461 432,461 432,466 433,466 433,469 434,469 434,470 435,470 435,472 436,472 436,473 437,473 437,477 438,477 438,471 440,471 440,477 441,477 441,479 442,479 442,481 443,481 443,480 444,480 444,482 445,482 445,478 446,478 446,473 448,473 448,478 449,478 449,481 450,481 450,483 453,483 453,477 454,477 454,473 455,473 455,475 456,475 456,480 457,480 457,482 458,482 458,483 459,483 459,481 460,481 460,482 461,482 461,474 462,474 462,472 463,472 463,474 464,474 464,468 465,468 465,461 466,461 466,452 468,452 468,457 469,457 469,452 470,452 470,451 471,451 471,455 472,455 472,458 473,458 473,460 474,460 474,462 476,462 476,467 477,467 477,461 479,461 479,466 480,466 480,469 481,469 481,470 482,470 482,472 483,472 483,473 484,473 484,477 485,477 485,471 487,471 487,477 488,477 488,479 489,479 489,481 490,481 490,480 491,480 491,482 492,482 492,478 493,478 493,473 495,473 495,478 496,478 496,481 497,481 497,483 500,483 500,477 501,477 501,473 502,473 502,475 503,475 503,480 504,480 504,482 505,482 505,483 506,483 506,481 507,481 507,482 508,482 508,474 509,474 509,472 510,472 510,473 511,473 511,467 512,467 512,461 513,461 513,452 515,452 515,457 516,457 516,451 518,451 518,455 519,455 519,458 520,458 520,460 521,460 521,462 523,462 523,466 524,466 524,461 525,461 525,458 526,458 526,456 528,456 528,459 529,459 529,461 530,461 530,462 531,462 531,464 532,464 532,460 534,460 534,465 535,465 535,468 536,468 536,471 537,471 537,473 538,473 538,475 539,475 539,478 540,478 540,481 541,481 541,483 542,483 542,481 543,481 543,483 547,483 547,474 548,474 548,472 549,472 549,476 550,476 550,481 551,481 551,483 555,483 555,473 557,473 557,474 558,474 558,468 559,468 559,461 560,461 560,452 562,452 562,457 563,457 563,452 564,452 564,451 565,451 565,455 566,455 566,458 567,458 567,460 568,460 568,462 570,462 570,467 571,467 571,461 573,461 573,466 574,466 574,469 575,469 575,470 576,470 576,472 577,472 577,473 578,473 578,477 579,477 579,471 581,471 581,477 582,477 582,479 583,479 583,481 584,481 584,480 585,480 585,482 586,482 586,478 587,478 587,473 589,473 589,478 590,478 590,481 591,481 591,483 594,483 594,477 595,477 595,473 596,473 596,475 597,475 597,480 598,480 598,482 599,482 599,483 600,483 600,481 601,481 601,482 602,482 602,474 604,474 604,468 605,468 605,461 606,461 606,452 608,452 608,457 609,457 609,452 610,452 610,451 611,451 611,455 612,455 612,458 613,458 613,460 614,460 614,462 616,462 616,467 617,467 617,461 619,461 619,466 620,466 620,469 621,469 621,470 622,470 622,472 623,472 623,473 624,473 624,477 625,477 625,471 627,471 627,477 628,477 628,479 629,479 629,481 630,481 630,480 631,480 631,482 632,482 632,478 633,478 633,473 635,473 635,478 636,478 636,481 637,481 637,483 640,483 640,477 641,477 641,473 642,473 642,475 643,475 643,480 644,480 644,482 645,482 645,483 646,483 646,481 647,481 647,482 648,482 648,474 649,474 649,472 650,472 650,474 651,474 651,468 652,468 652,461 653,461 653,452 655,452 655,457 656,457 656,452 657,452 657,451 658,451 658,455 659,455 659,458 660,458 660,460 661,460 661,462 663,462 663,467 664,467 664,461 666,461 666,466 667,466 667,469 668,469 668,470 669,470 669,472 670,472 670,473 671,473 671,484"/>
<rect x="108" y="19" width="564" height="1" fill="#fff"/>
<rect x="108" y="483" width="564" height="1" fill="#fff"/>
<rect x="108" y="19" width="1" height="465" fill="#fff"/>
<rect x="671" y="19" width="1" height="465" fill="#fff"/>
<rect x="128" y="483" width="1" height="1" fill="#ff0000"/>
<rect x="129" y="483" width="1" height="1" fill="#ff0000"/>
<rect x="131" y="483" width="1" height="1" fill="#ff0000"/>
<rect x="166" y="483" width="1" height="1" fill="#ff0000"/>
<rect x="168" y="483" width="1" height="1" fill="#ff0000"/>
<rect x="170" y="483" width="1" height="1" fill="#ff0000"/>
<rect x="175" y="483" width="1" height="1" fill="#ff0000"/>
<rect x="176" y="483" width="1" height="1" fill="#ff0000"/>
<rect x="178" y="483" width="1" height="1" fill="#ff0000"/>
<rect x="209" y="483" width="1" height="1" fill="#ff0000"/>
<rect x="215" y="483" width="1" height="1" fill="#ff0000"/>
<rect x="217" y="483" width="1" height="1" fill="#ff0000"/>
<rect x="222" y="483" width="1" height="1" fill="#ff0000"/>
<rect x="223" y="483" width="1" height="1" fill="#ff0000"/>
<rect x="225" y="483" width="1" height="1" fill="#ff0000"/>
<rect x="256" y="483" width="1" height="1" fill="#ff0000"/>
<rect x="262" y="483" width="1" height="1" fill="#ff0000"/>
<rect x="264" y="483" width="1" height="1" fill="#ff0000"/>
<rect x="269" y="483" width="1" height="1" fill="#ff0000"/>
<rect x="270" y="483" width="1" height="1" fill="#ff0000"/>
<rect x="272" y="483" width="1" height="1" fill="#ff0000"/>
<rect x="303" y="483" width="1" height="1" fill="#ff0000"/>
<rect x="309" y="483" width="1" height="1" fill="#ff0000"/>
<rect x="311" y="483" width="1" height="1" fill="#ff0000"/>
<rect x="316" y="483" width="1" height="1" fill="#ff0000"/>
<rect x="317" y="483" width="1" height="1" fill="#ff0000"/>
<rect x="319" y="483" width="1" height="1" fill="#ff0000"/>
<rect x="353" y="483" width="1" height="1" fill="#ff0000"/>
<rect x="355" y="483" width="1" height="1" fill="#ff0000"/>
<rect x="358" y="483" width="1" height="1" fill="#ff0000"/>
<rect x="363" y="483" width="1" height="1" fill="#ff0000"/>
<rect x="366" y="483" width="1" height="1" fill="#ff0000"/>
<rect x="397" y="483" width="1" height="1" fill="#ff0000"/>
<rect x="403" y="483" width="1" height="1" fill="#ff0000"/>
<rect x="405" y="483" width="1" height="1" fill="#ff0000"/>
<rect x="410" y="483" width="1" height="1" fill="#ff0000"/>
<rect x="411" y="483" width="1" height="1" fill="#ff0000"/>
<rect x="413" y="483" width="1" height="1" fill="#ff0000"/>
<rect x="444" y="483" width="1" height="1" fill="#ff0000"/>
<rect x="450" y="483" width="1" height="1" fill="#ff0000"/>
<rect x="452" y="483" width="1" height="1" fill="#ff0000"/>
<rect x="457" y="483" width="1" height="1" fill="#ff0000"/>
<rect x="458" y="483" width="1" height="1" fill="#ff0000"/>
<rect x="460" y="483" width="1" height="1" fill="#ff0000"/>
<rect x="491" y="483" width="1" height="1" fill="#ff0000"/>
<rect x="497" y="483" width="1" height="1" fill="#ff0000"/>
<rect x="499" y="483" width="1" height="1" fill="#ff0000"/>
<rect x="504" y="483" width="1" height="1" fill="#ff0000"/>
<rect x="505" y="483" width="1" height="1" fill="#ff0000"/>
<rect x="507" y="483" width="1" height="1" fill="#ff0000"/>
<rect x="541" y="483" width="1" height="1" fill="#ff0000"/>
<rect x="543" y="483" width="1" height="1" fill="#ff0000"/>
<rect x="546" y="483" width="1" height="1" fill="#ff0000"/>
<rect x="551" y="483" width="1" height="1" fill="#ff0000"/>
<rect x="554" y="483" width="1" height="1" fill="#ff0000"/>
<rect x="585" y="483" width="1" height="1" fill="#ff0000"/>
<rect x="591" y="483" width="1" height="1" fill="#ff0000"/>
<rect x="593" y="483" width="1" height="1" fill="#ff0000"/>
<rect x="598" y="483" width="1" height="1" fill="#ff0000"/>
<rect x="599" y="483" width="1" height="1" fill="#ff0000"/>
<rect x="601" y="483" width="1" height="1" fill="#ff0000"/>
<rect x="631" y="483" width="1" height="1" fill="#ff0000"/>
<rect x="637" y="483" width="1" height="1" fill="#ff0000"/>
<rect x="639" y="483" width="1" height="1" fill="#ff0000"/>
<rect x="644" y="483" width="1" height="1" fill="#ff0000"/>
<rect x="645" y="483" width="1" height="1" fill="#ff0000"/>
<rect x="647" y="483" width="1" height="1" fill="#ff0000"/>
<rect x="142" y="19" width="1" height="11" fill="#fff"/>
<rect x="181" y="19" width="1" height="6" fill="#fff"/>
<rect x="220" y="19" width="1" height="6" fill="#fff"/>
<rect x="259" y="19" width="1" height="6" fill="#fff"/>
<rect x="298" y="19" width="1" height="11" fill="#fff"/>
<rect x="337" y="19" width="1" height="6" fill="#fff"/>
<rect x="376" y="19" width="1" height="6" fill="#fff"/>
<rect x="416" y="19" width="1" height="6" fill="#fff"/>
<rect x="455" y="19" width="1" height="11" fill="#fff"/>
<rect x="494" y="19" width="1" height="6" fill="#fff"/>
<rect x="533" y="19" width="1" height="6" fill="#fff"/>
<rect x="572" y="19" width="1" height="6" fill="#fff"/>
<rect x="611" y="19" width="1" height="11" fill="#fff"/>
<rect x="650" y="19" width="1" height="6" fill="#fff"/>
<text x="125.5" y="14" font-size="11.2" fill="#fff" text-anchor="start" textLength="33" lengthAdjust="spacingAndGlyphs">20:00</text>
<text x="125.5" y="502" font-size="11.2" fill="#fff" text-anchor="start" textLength="33" lengthAdjust="spacingAndGlyphs">20:00</text>
<text x="282.5" y="14" font-size="11.2" fill="#fff" text-anchor="start" textLength="33" lengthAdjust="spacingAndGlyphs">16:00</text>
<text x="282.5" y="502" font-size="11.2" fill="#fff" text-anchor="start" textLength="33" lengthAdjust="spacingAndGlyphs">16:00</text>
<text x="438.5" y="14" font-size="11.2" fill="#fff" text-anchor="start" textLength="33" lengthAdjust="spacingAndGlyphs">12:00</text>
<text x="438.5" y="502" font-size="11.2" fill="#fff" text-anchor="start" textLength="33" lengthAdjust="spacingAndGlyphs">12:00</text>
<text x="594.5" y="14" font-size="11.2" fill="#fff" text-anchor="start" textLength="33" lengthAdjust="spacingAndGlyphs">08:00</text>
<text x="594.5" y="502" font-size="11.2" fill="#fff" text-anchor="start" textLength="33" lengthAdjust="spacingAndGlyphs">08:00</text>
<text x="308.4" y="518.5" font-size="12.6" fill="#fff" text-anchor="start" textLength="76" lengthAdjust="spacingAndGlyphs">2005/10/04</text>
<text x="393" y="518.5" font-size="12.6" fill="#fff" text-anchor="start" textLength="77" lengthAdjust="spacingAndGlyphs">15:36:00.000</text>
<text x="18" y="62.3" font-size="12.6" fill="#fff" text-anchor="start" textLength="14.6" lengthAdjust="spacingAndGlyphs">TM</text>
<text x="40.3" y="62.3" font-size="12.6" fill="#fff" text-anchor="start" textLength="54.8" lengthAdjust="spacingAndGlyphs">SUBMODE</text>
<text x="7.7" y="108.8" font-size="13" fill="#fff" text-anchor="start" textLength="93.3" lengthAdjust="spacingAndGlyphs">LASCO/EIT (OP)</text>
<text x="7.5" y="453.2" font-size="13" fill="#fff" text-anchor="start" textLength="81.7" lengthAdjust="spacingAndGlyphs">LASCO-buffer</text>
<text x="49" y="149.8" font-size="13" fill="#fff" text-anchor="start" textLength="52" lengthAdjust="spacingAndGlyphs">OS_3092</text>
<text x="49" y="175.3" font-size="13" fill="#fff" text-anchor="start" textLength="52" lengthAdjust="spacingAndGlyphs">OS_3342</text>
<text x="49" y="200.9" font-size="13" fill="#fff" text-anchor="start" textLength="52" lengthAdjust="spacingAndGlyphs">OS_3361</text>
<text x="49" y="226.4" font-size="13" fill="#fff" text-anchor="start" textLength="52" lengthAdjust="spacingAndGlyphs">OS_3387</text>
<text x="49" y="252.0" font-size="13" fill="#fff" text-anchor="start" textLength="52" lengthAdjust="spacingAndGlyphs">OS_3389</text>
<text x="49" y="277.5" font-size="13" fill="#fff" text-anchor="start" textLength="52" lengthAdjust="spacingAndGlyphs">OS_3390</text>
<text x="49" y="303.0" font-size="13" fill="#fff" text-anchor="start" textLength="52" lengthAdjust="spacingAndGlyphs">OS_3405</text>
<text x="49" y="328.6" font-size="13" fill="#fff" text-anchor="start" textLength="52" lengthAdjust="spacingAndGlyphs">OS_3422</text>
<text x="49" y="354.1" font-size="13" fill="#fff" text-anchor="start" textLength="52" lengthAdjust="spacingAndGlyphs">OS_3532</text>
<text x="49" y="379.7" font-size="13" fill="#fff" text-anchor="start" textLength="52" lengthAdjust="spacingAndGlyphs">OS_3568</text>
<text x="49" y="405.2" font-size="13" fill="#fff" text-anchor="start" textLength="52" lengthAdjust="spacingAndGlyphs">OS_3570</text>
<text x="100.8" y="38.5" font-size="12.4" fill="#fff" text-anchor="start" textLength="6.2" lengthAdjust="spacingAndGlyphs">5</text>
<text x="100.8" y="47.8" font-size="12.4" fill="#fff" text-anchor="start" textLength="6.2" lengthAdjust="spacingAndGlyphs">4</text>
<text x="100.8" y="57.1" font-size="12.4" fill="#fff" text-anchor="start" textLength="6.2" lengthAdjust="spacingAndGlyphs">3</text>
<text x="100.8" y="66.4" font-size="12.4" fill="#fff" text-anchor="start" textLength="6.2" lengthAdjust="spacingAndGlyphs">2</text>
<text x="100.8" y="75.7" font-size="12.4" fill="#fff" text-anchor="start" textLength="6.2" lengthAdjust="spacingAndGlyphs">1</text>
<text x="86.75" y="431.2" font-size="11.6" fill="#fff" text-anchor="start" textLength="20.25" lengthAdjust="spacingAndGlyphs">100</text>
<text x="93" y="443.2" font-size="11.6" fill="#fff" text-anchor="start" textLength="14" lengthAdjust="spacingAndGlyphs">80</text>
<text x="93" y="476.8" font-size="11.6" fill="#fff" text-anchor="start" textLength="14" lengthAdjust="spacingAndGlyphs">20</text>
<text x="100.8" y="487.8" font-size="11.6" fill="#fff" text-anchor="start" textLength="6.4" lengthAdjust="spacingAndGlyphs">0</text>
<text x="13.9" y="520" font-size="9.8" fill="#ff0000" text-anchor="start" textLength="10.6" lengthAdjust="spacingAndGlyphs">C1</text>
<text x="35" y="520" font-size="9.8" fill="#00ff00" text-anchor="start" textLength="12.1" lengthAdjust="spacingAndGlyphs">C2</text>
<text x="56" y="520" font-size="9.8" fill="#96e6f5" text-anchor="start" textLength="11.9" lengthAdjust="spacingAndGlyphs">C3</text>
<text x="76.9" y="520" font-size="9.8" fill="#ffff00" text-anchor="start" textLength="13.1" lengthAdjust="spacingAndGlyphs">EIT</text>
</svg>
</body></html>
